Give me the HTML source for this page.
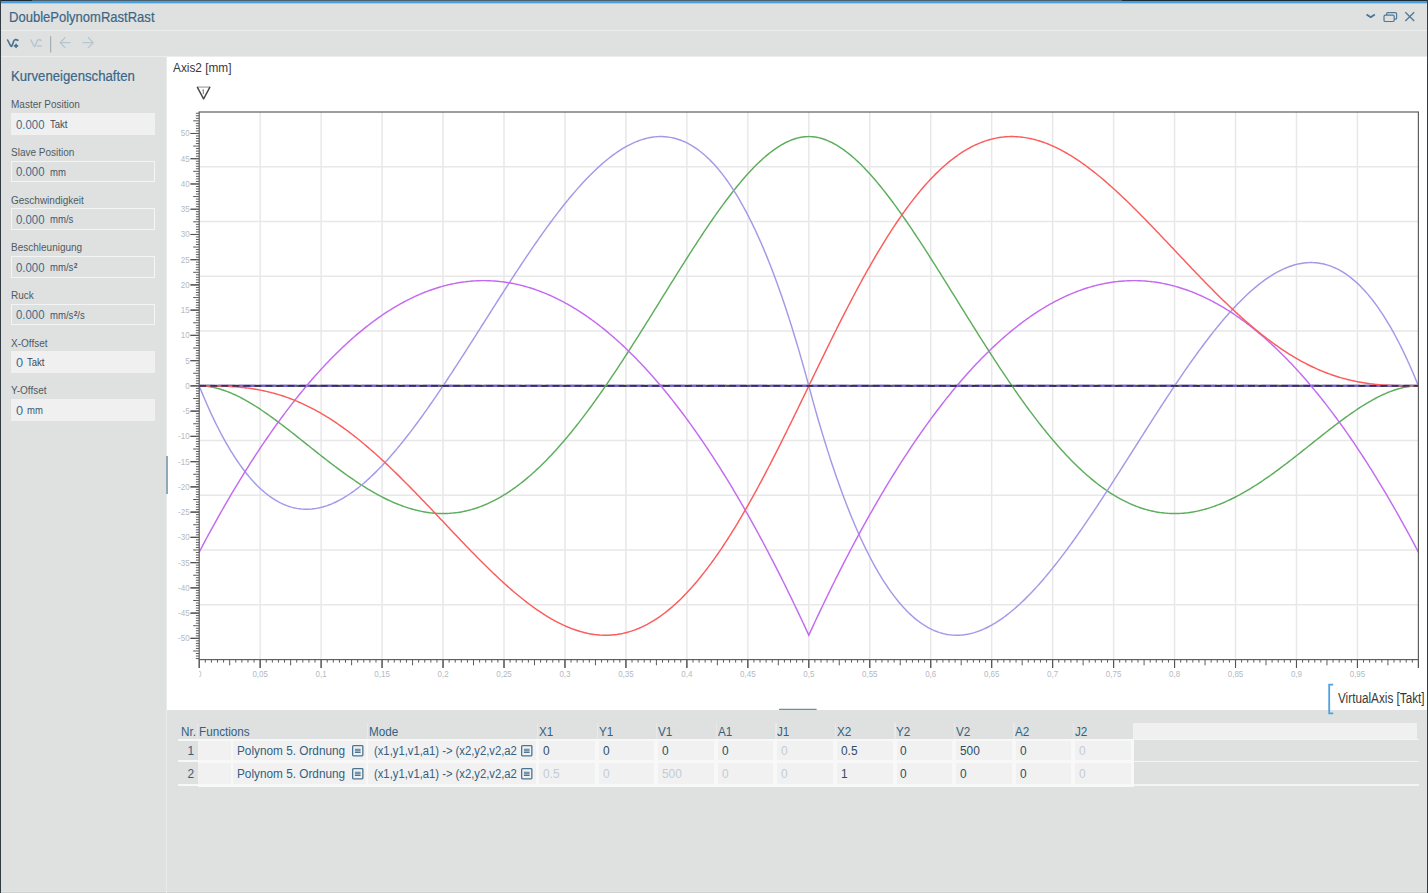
<!DOCTYPE html>
<html><head><meta charset="utf-8">
<style>
*{margin:0;padding:0;box-sizing:border-box}
html,body{width:1428px;height:893px;overflow:hidden;background:#dfe1e0;font-family:"Liberation Sans",sans-serif}
.abs{position:absolute}
.t{position:absolute;white-space:nowrap;line-height:normal}
.sup{font-size:7px;position:relative;top:-3.2px;margin-left:0.3px;font-weight:bold}
#topdark{left:0;top:0;width:1428px;height:1px;background:linear-gradient(90deg,#1c2833 0,#1c2833 32px,#4c5f6d 32px,#4c5f6d 1122px,#1e2a34 1122px)}
#topblue{left:0;top:1px;width:1428px;height:2px;background:#45a0dc}
#topblue2{left:0;top:3px;width:1428px;height:1px;background:#a8cbe2}
#lb{left:0;top:0;width:1px;height:893px;background:#333c43}
#rb{left:1427px;top:0;width:1px;height:893px;background:#333c43}
.hl{background:#eceeed;height:1px}
#left{left:1px;top:57px;width:165px;height:836px;background:#dfe1e0}
#white{left:167px;top:57px;width:1260px;height:653px;background:#fff}
#bottom{left:167px;top:710px;width:1260px;height:183px;background:#dfe1e0}
svg{position:absolute;left:0;top:0}
</style></head><body>
<div class="abs" id="topdark"></div>
<div class="abs" id="topblue"></div>
<div class="abs" id="topblue2"></div>
<div class="abs hl" style="left:1px;top:30px;width:1426px"></div>
<div class="abs hl" style="left:1px;top:56px;width:1426px"></div>
<div class="abs" id="left"></div>
<div class="abs" id="white"></div>
<div class="abs" id="bottom"></div>
<div class="abs" style="left:0;top:891px;width:1428px;height:1px;background:#e3e5e4"></div>
<div class="abs" style="left:0;top:892px;width:1428px;height:1px;background:#cdd0d1"></div>
<div class="abs" id="lb"></div>
<div class="abs" id="rb"></div>

<div class="t" style="left:9.00px;top:8.65px;font-size:14.4px;color:#3b6686;transform:scaleX(0.905);transform-origin:0 0;-webkit-text-stroke:0.2px #3b6686;">DoublePolynomRastRast</div>
<div class="t" style="left:11.40px;top:67.85px;font-size:14.08px;color:#3a6788;transform:scaleX(0.936);transform-origin:0 0;-webkit-text-stroke:0.2px #3a6788;">Kurveneigenschaften</div>
<div class="t" style="left:11.00px;top:99.20px;font-size:10px;color:#505a62;">Master Position</div>
<div class="abs" style="left:11px;top:113.20px;width:144.4px;height:21.6px;background:#f0f0f0"></div>
<div class="t" style="left:15.60px;top:116.74px;font-size:13px;color:#3e6a8c;transform:scaleX(0.875);transform-origin:0 0;">0.000</div>
<div class="t" style="left:49.50px;top:119.20px;font-size:10px;color:#3a4a58;transform:scaleX(0.955);transform-origin:0 0;">Takt</div>
<div class="t" style="left:11.00px;top:146.87px;font-size:10px;color:#505a62;">Slave Position</div>
<div class="abs" style="left:11px;top:160.83px;width:144.4px;height:21.6px;border:1px solid #f3f4f4"></div>
<div class="t" style="left:15.60px;top:164.37px;font-size:13px;color:#3e6a8c;transform:scaleX(0.875);transform-origin:0 0;">0.000</div>
<div class="t" style="left:49.50px;top:166.83px;font-size:10px;color:#40566a;transform:scaleX(0.955);transform-origin:0 0;">mm</div>
<div class="t" style="left:11.00px;top:194.54px;font-size:10px;color:#505a62;">Geschwindigkeit</div>
<div class="abs" style="left:11px;top:208.46px;width:144.4px;height:21.6px;border:1px solid #f3f4f4"></div>
<div class="t" style="left:15.60px;top:212.00px;font-size:13px;color:#3e6a8c;transform:scaleX(0.875);transform-origin:0 0;">0.000</div>
<div class="t" style="left:49.50px;top:214.46px;font-size:10px;color:#40566a;transform:scaleX(0.955);transform-origin:0 0;">mm/s</div>
<div class="t" style="left:11.00px;top:242.21px;font-size:10px;color:#505a62;">Beschleunigung</div>
<div class="abs" style="left:11px;top:256.09px;width:144.4px;height:21.6px;border:1px solid #f3f4f4"></div>
<div class="t" style="left:15.60px;top:259.63px;font-size:13px;color:#3e6a8c;transform:scaleX(0.875);transform-origin:0 0;">0.000</div>
<div class="t" style="left:49.50px;top:262.09px;font-size:10px;color:#40566a;transform:scaleX(0.955);transform-origin:0 0;">mm/s<span class="sup">2</span></div>
<div class="t" style="left:11.00px;top:289.88px;font-size:10px;color:#505a62;">Ruck</div>
<div class="abs" style="left:11px;top:303.72px;width:144.4px;height:21.6px;border:1px solid #f3f4f4"></div>
<div class="t" style="left:15.60px;top:307.26px;font-size:13px;color:#3e6a8c;transform:scaleX(0.875);transform-origin:0 0;">0.000</div>
<div class="t" style="left:49.50px;top:309.72px;font-size:10px;color:#40566a;transform:scaleX(0.955);transform-origin:0 0;">mm/s<span class="sup">2</span>/s</div>
<div class="t" style="left:11.00px;top:337.55px;font-size:10px;color:#505a62;">X-Offset</div>
<div class="abs" style="left:11px;top:351.35px;width:144.4px;height:21.6px;background:#f0f0f0"></div>
<div class="t" style="left:15.60px;top:354.89px;font-size:13px;color:#3e6a8c;transform:scaleX(0.98);transform-origin:0 0;">0</div>
<div class="t" style="left:26.60px;top:357.35px;font-size:10px;color:#3a4a58;transform:scaleX(0.955);transform-origin:0 0;">Takt</div>
<div class="t" style="left:11.00px;top:385.22px;font-size:10px;color:#505a62;">Y-Offset</div>
<div class="abs" style="left:11px;top:398.98px;width:144.4px;height:21.6px;background:#f0f0f0"></div>
<div class="t" style="left:15.60px;top:402.52px;font-size:13px;color:#3e6a8c;transform:scaleX(0.98);transform-origin:0 0;">0</div>
<div class="t" style="left:26.60px;top:404.98px;font-size:10px;color:#40566a;transform:scaleX(0.955);transform-origin:0 0;">mm</div>
<div class="abs" style="left:166px;top:57px;width:1px;height:836px;background:#e9ebea"></div>
<div class="abs" style="left:166px;top:456px;width:1.8px;height:37.7px;background:#8fa8b8"></div>
<div class="t" style="left:172.90px;top:60.23px;font-size:13.45px;color:#383838;transform:scaleX(0.88);transform-origin:0 0;">Axis2 [mm]</div>
<div class="t" style="left:1337.60px;top:690.53px;font-size:13.77px;color:#383838;transform:scaleX(0.853);transform-origin:0 0;">VirtualAxis [Takt]</div>
<div class="abs" style="left:1133px;top:723px;width:284px;height:16.9px;background:#f0f0f0"></div>
<div class="abs" style="left:196.90px;top:723px;width:1.3px;height:16px;background:#e8eaea"></div>
<div class="abs" style="left:366.70px;top:723px;width:1.3px;height:16px;background:#e8eaea"></div>
<div class="abs" style="left:537.00px;top:723px;width:1.3px;height:16px;background:#e8eaea"></div>
<div class="abs" style="left:596.56px;top:723px;width:1.3px;height:16px;background:#e8eaea"></div>
<div class="abs" style="left:656.12px;top:723px;width:1.3px;height:16px;background:#e8eaea"></div>
<div class="abs" style="left:715.68px;top:723px;width:1.3px;height:16px;background:#e8eaea"></div>
<div class="abs" style="left:775.24px;top:723px;width:1.3px;height:16px;background:#e8eaea"></div>
<div class="abs" style="left:834.80px;top:723px;width:1.3px;height:16px;background:#e8eaea"></div>
<div class="abs" style="left:894.36px;top:723px;width:1.3px;height:16px;background:#e8eaea"></div>
<div class="abs" style="left:953.92px;top:723px;width:1.3px;height:16px;background:#e8eaea"></div>
<div class="abs" style="left:1013.48px;top:723px;width:1.3px;height:16px;background:#e8eaea"></div>
<div class="abs" style="left:1073.04px;top:723px;width:1.3px;height:16px;background:#e8eaea"></div>
<div class="abs" style="left:198px;top:739.1px;width:936px;height:47.7px;background:#f8f8f8"></div>
<div class="abs" style="left:178px;top:739.1px;width:20px;height:1.5px;background:#f6f7f7"></div>
<div class="abs" style="left:1134px;top:739.4px;width:285px;height:1.1px;background:#f3f4f4"></div>
<div class="abs" style="left:178px;top:760.2px;width:20px;height:2.2px;background:#f6f7f7"></div>
<div class="abs" style="left:1134px;top:760.5px;width:285px;height:1.8000000000000003px;background:#f3f4f4"></div>
<div class="abs" style="left:178px;top:784.0px;width:20px;height:2.4px;background:#f6f7f7"></div>
<div class="abs" style="left:1134px;top:784.3px;width:285px;height:2.0px;background:#f3f4f4"></div>
<div class="abs" style="left:198.20px;top:741.1px;width:33.00px;height:18.50px;background:#f1f1f1"></div>
<div class="abs" style="left:198.20px;top:762.9px;width:33.00px;height:20.90px;background:#f1f1f1"></div>
<div class="abs" style="left:232.50px;top:741.1px;width:133.80px;height:18.50px;background:#f1f1f1"></div>
<div class="abs" style="left:232.50px;top:762.9px;width:133.80px;height:20.90px;background:#f1f1f1"></div>
<div class="abs" style="left:368.40px;top:741.1px;width:168.00px;height:18.50px;background:#f1f1f1"></div>
<div class="abs" style="left:368.40px;top:762.9px;width:168.00px;height:20.90px;background:#f1f1f1"></div>
<div class="abs" style="left:539.20px;top:741.1px;width:55.56px;height:18.50px;background:#f1f1f1"></div>
<div class="abs" style="left:539.20px;top:762.9px;width:55.56px;height:20.90px;background:#f1f1f1"></div>
<div class="abs" style="left:598.76px;top:741.1px;width:55.56px;height:18.50px;background:#f1f1f1"></div>
<div class="abs" style="left:598.76px;top:762.9px;width:55.56px;height:20.90px;background:#f1f1f1"></div>
<div class="abs" style="left:658.32px;top:741.1px;width:55.56px;height:18.50px;background:#f1f1f1"></div>
<div class="abs" style="left:658.32px;top:762.9px;width:55.56px;height:20.90px;background:#f1f1f1"></div>
<div class="abs" style="left:717.88px;top:741.1px;width:55.56px;height:18.50px;background:#f1f1f1"></div>
<div class="abs" style="left:717.88px;top:762.9px;width:55.56px;height:20.90px;background:#f1f1f1"></div>
<div class="abs" style="left:777.44px;top:741.1px;width:55.56px;height:18.50px;background:#f1f1f1"></div>
<div class="abs" style="left:777.44px;top:762.9px;width:55.56px;height:20.90px;background:#f1f1f1"></div>
<div class="abs" style="left:837.00px;top:741.1px;width:55.56px;height:18.50px;background:#f1f1f1"></div>
<div class="abs" style="left:837.00px;top:762.9px;width:55.56px;height:20.90px;background:#f1f1f1"></div>
<div class="abs" style="left:896.56px;top:741.1px;width:55.56px;height:18.50px;background:#f1f1f1"></div>
<div class="abs" style="left:896.56px;top:762.9px;width:55.56px;height:20.90px;background:#f1f1f1"></div>
<div class="abs" style="left:956.12px;top:741.1px;width:55.56px;height:18.50px;background:#f1f1f1"></div>
<div class="abs" style="left:956.12px;top:762.9px;width:55.56px;height:20.90px;background:#f1f1f1"></div>
<div class="abs" style="left:1015.68px;top:741.1px;width:55.56px;height:18.50px;background:#f1f1f1"></div>
<div class="abs" style="left:1015.68px;top:762.9px;width:55.56px;height:20.90px;background:#f1f1f1"></div>
<div class="abs" style="left:1075.24px;top:741.1px;width:55.56px;height:18.50px;background:#f1f1f1"></div>
<div class="abs" style="left:1075.24px;top:762.9px;width:55.56px;height:20.90px;background:#f1f1f1"></div>
<div class="t" style="left:180.60px;top:724.98px;font-size:12.3px;color:#33607f;transform:scaleX(0.95);transform-origin:0 0;">Nr.</div>
<div class="t" style="left:199.40px;top:724.98px;font-size:12.3px;color:#33607f;transform:scaleX(0.95);transform-origin:0 0;">Functions</div>
<div class="t" style="left:369.20px;top:724.98px;font-size:12.3px;color:#33607f;transform:scaleX(0.95);transform-origin:0 0;">Mode</div>
<div class="t" style="left:539.00px;top:724.98px;font-size:12.3px;color:#33607f;transform:scaleX(0.95);transform-origin:0 0;">X1</div>
<div class="t" style="left:598.56px;top:724.98px;font-size:12.3px;color:#33607f;transform:scaleX(0.95);transform-origin:0 0;">Y1</div>
<div class="t" style="left:658.12px;top:724.98px;font-size:12.3px;color:#33607f;transform:scaleX(0.95);transform-origin:0 0;">V1</div>
<div class="t" style="left:717.68px;top:724.98px;font-size:12.3px;color:#33607f;transform:scaleX(0.95);transform-origin:0 0;">A1</div>
<div class="t" style="left:777.24px;top:724.98px;font-size:12.3px;color:#33607f;transform:scaleX(0.95);transform-origin:0 0;">J1</div>
<div class="t" style="left:836.80px;top:724.98px;font-size:12.3px;color:#33607f;transform:scaleX(0.95);transform-origin:0 0;">X2</div>
<div class="t" style="left:896.36px;top:724.98px;font-size:12.3px;color:#33607f;transform:scaleX(0.95);transform-origin:0 0;">Y2</div>
<div class="t" style="left:955.92px;top:724.98px;font-size:12.3px;color:#33607f;transform:scaleX(0.95);transform-origin:0 0;">V2</div>
<div class="t" style="left:1015.48px;top:724.98px;font-size:12.3px;color:#33607f;transform:scaleX(0.95);transform-origin:0 0;">A2</div>
<div class="t" style="left:1075.04px;top:724.98px;font-size:12.3px;color:#33607f;transform:scaleX(0.95);transform-origin:0 0;">J2</div>
<div class="t" style="left:182.00px;width:12px;text-align:right;top:744.20px;font-size:12.5px;color:#33607f;transform:scaleX(0.95);transform-origin:100% 0;">1</div>
<div class="t" style="left:237.40px;top:744.20px;font-size:12.5px;color:#33607f;transform:scaleX(0.943);transform-origin:0 0;">Polynom 5. Ordnung</div>
<div class="t" style="left:374.20px;top:744.20px;font-size:12.5px;color:#33607f;transform:scaleX(0.9);transform-origin:0 0;">(x1,y1,v1,a1) -&gt; (x2,y2,v2,a2</div>
<svg width="13" height="13" viewBox="0 0 13 13" style="left:351.6px;top:745.3px"><rect x="0.65" y="0.65" width="10.2" height="10.2" rx="0.8" stroke="#4a7592" stroke-width="1.3" fill="none"/><path d="M2.9,4.3 H8.6 M2.9,5.9 H8.6 M2.9,7.5 H8.6" stroke="#4a7592" stroke-width="1.1"/></svg>
<svg width="13" height="13" viewBox="0 0 13 13" style="left:521.2px;top:745.3px"><rect x="0.65" y="0.65" width="10.2" height="10.2" rx="0.8" stroke="#4a7592" stroke-width="1.3" fill="none"/><path d="M2.9,4.3 H8.6 M2.9,5.9 H8.6 M2.9,7.5 H8.6" stroke="#4a7592" stroke-width="1.1"/></svg>
<div class="t" style="left:543.10px;top:744.20px;font-size:12.5px;color:#2f4d63;transform:scaleX(0.95);transform-origin:0 0;">0</div>
<div class="t" style="left:602.66px;top:744.20px;font-size:12.5px;color:#2f4d63;transform:scaleX(0.95);transform-origin:0 0;">0</div>
<div class="t" style="left:662.22px;top:744.20px;font-size:12.5px;color:#2f4d63;transform:scaleX(0.95);transform-origin:0 0;">0</div>
<div class="t" style="left:721.78px;top:744.20px;font-size:12.5px;color:#2f4d63;transform:scaleX(0.95);transform-origin:0 0;">0</div>
<div class="t" style="left:781.34px;top:744.20px;font-size:12.5px;color:#c2cdd6;transform:scaleX(0.95);transform-origin:0 0;">0</div>
<div class="t" style="left:840.90px;top:744.20px;font-size:12.5px;color:#2f4d63;transform:scaleX(0.95);transform-origin:0 0;">0.5</div>
<div class="t" style="left:900.46px;top:744.20px;font-size:12.5px;color:#2f4d63;transform:scaleX(0.95);transform-origin:0 0;">0</div>
<div class="t" style="left:960.02px;top:744.20px;font-size:12.5px;color:#2f4d63;transform:scaleX(0.95);transform-origin:0 0;">500</div>
<div class="t" style="left:1019.58px;top:744.20px;font-size:12.5px;color:#2f4d63;transform:scaleX(0.95);transform-origin:0 0;">0</div>
<div class="t" style="left:1079.14px;top:744.20px;font-size:12.5px;color:#c2cdd6;transform:scaleX(0.95);transform-origin:0 0;">0</div>
<div class="t" style="left:182.00px;width:12px;text-align:right;top:767.20px;font-size:12.5px;color:#33607f;transform:scaleX(0.95);transform-origin:100% 0;">2</div>
<div class="t" style="left:237.40px;top:767.20px;font-size:12.5px;color:#33607f;transform:scaleX(0.943);transform-origin:0 0;">Polynom 5. Ordnung</div>
<div class="t" style="left:374.20px;top:767.20px;font-size:12.5px;color:#33607f;transform:scaleX(0.9);transform-origin:0 0;">(x1,y1,v1,a1) -&gt; (x2,y2,v2,a2</div>
<svg width="13" height="13" viewBox="0 0 13 13" style="left:351.6px;top:768.3px"><rect x="0.65" y="0.65" width="10.2" height="10.2" rx="0.8" stroke="#4a7592" stroke-width="1.3" fill="none"/><path d="M2.9,4.3 H8.6 M2.9,5.9 H8.6 M2.9,7.5 H8.6" stroke="#4a7592" stroke-width="1.1"/></svg>
<svg width="13" height="13" viewBox="0 0 13 13" style="left:521.2px;top:768.3px"><rect x="0.65" y="0.65" width="10.2" height="10.2" rx="0.8" stroke="#4a7592" stroke-width="1.3" fill="none"/><path d="M2.9,4.3 H8.6 M2.9,5.9 H8.6 M2.9,7.5 H8.6" stroke="#4a7592" stroke-width="1.1"/></svg>
<div class="t" style="left:543.10px;top:767.20px;font-size:12.5px;color:#c2cdd6;transform:scaleX(0.95);transform-origin:0 0;">0.5</div>
<div class="t" style="left:602.66px;top:767.20px;font-size:12.5px;color:#c2cdd6;transform:scaleX(0.95);transform-origin:0 0;">0</div>
<div class="t" style="left:662.22px;top:767.20px;font-size:12.5px;color:#c2cdd6;transform:scaleX(0.95);transform-origin:0 0;">500</div>
<div class="t" style="left:721.78px;top:767.20px;font-size:12.5px;color:#c2cdd6;transform:scaleX(0.95);transform-origin:0 0;">0</div>
<div class="t" style="left:781.34px;top:767.20px;font-size:12.5px;color:#c2cdd6;transform:scaleX(0.95);transform-origin:0 0;">0</div>
<div class="t" style="left:840.90px;top:767.20px;font-size:12.5px;color:#2f4d63;transform:scaleX(0.95);transform-origin:0 0;">1</div>
<div class="t" style="left:900.46px;top:767.20px;font-size:12.5px;color:#2f4d63;transform:scaleX(0.95);transform-origin:0 0;">0</div>
<div class="t" style="left:960.02px;top:767.20px;font-size:12.5px;color:#2f4d63;transform:scaleX(0.95);transform-origin:0 0;">0</div>
<div class="t" style="left:1019.58px;top:767.20px;font-size:12.5px;color:#2f4d63;transform:scaleX(0.95);transform-origin:0 0;">0</div>
<div class="t" style="left:1079.14px;top:767.20px;font-size:12.5px;color:#c2cdd6;transform:scaleX(0.95);transform-origin:0 0;">0</div>

<svg width="1428" height="893" viewBox="0 0 1428 893">
<path d="M260.16,112.0 V659.6 M321.12,112.0 V659.6 M382.08,112.0 V659.6 M443.04,112.0 V659.6 M504.00,112.0 V659.6 M564.96,112.0 V659.6 M625.92,112.0 V659.6 M686.88,112.0 V659.6 M747.84,112.0 V659.6 M808.80,112.0 V659.6 M869.76,112.0 V659.6 M930.72,112.0 V659.6 M991.68,112.0 V659.6 M1052.64,112.0 V659.6 M1113.60,112.0 V659.6 M1174.56,112.0 V659.6 M1235.52,112.0 V659.6 M1296.48,112.0 V659.6 M1357.44,112.0 V659.6 M199.2,166.76 H1418.4 M199.2,221.52 H1418.4 M199.2,276.28 H1418.4 M199.2,331.04 H1418.4 M199.2,385.80 H1418.4 M199.2,440.56 H1418.4 M199.2,495.32 H1418.4 M199.2,550.08 H1418.4 M199.2,604.84 H1418.4" stroke="#e8e8e8" stroke-width="1.5" fill="none"/>
<path d="M199.2,385.9 H1418.4" stroke="#5c5c5c" stroke-width="2.1" fill="none"/>
<path d="M199.2,385.9 H1418.4" stroke="#7566d6" stroke-width="2.1" stroke-dasharray="16.95 3.5" stroke-dashoffset="1.35" fill="none"/>
<path d="M199.20,385.90 L200.72,385.92 L202.25,385.97 L203.77,386.07 L205.30,386.19 L206.82,386.35 L208.34,386.55 L209.87,386.78 L211.39,387.04 L212.92,387.34 L214.44,387.66 L215.96,388.02 L217.49,388.41 L219.01,388.82 L220.54,389.27 L222.06,389.75 L223.58,390.25 L225.11,390.78 L226.63,391.34 L228.16,391.92 L229.68,392.53 L231.20,393.16 L232.73,393.82 L234.25,394.51 L235.78,395.21 L237.30,395.94 L238.82,396.69 L240.35,397.46 L241.87,398.26 L243.40,399.07 L244.92,399.90 L246.44,400.76 L247.97,401.63 L249.49,402.52 L251.02,403.42 L252.54,404.35 L254.06,405.29 L255.59,406.25 L257.11,407.22 L258.64,408.21 L260.16,409.21 L261.68,410.23 L263.21,411.26 L264.73,412.30 L266.26,413.36 L267.78,414.43 L269.30,415.51 L270.83,416.60 L272.35,417.70 L273.88,418.81 L275.40,419.93 L276.92,421.06 L278.45,422.19 L279.97,423.34 L281.50,424.49 L283.02,425.66 L284.54,426.82 L286.07,428.00 L287.59,429.18 L289.12,430.36 L290.64,431.55 L292.16,432.75 L293.69,433.94 L295.21,435.15 L296.74,436.35 L298.26,437.56 L299.78,438.77 L301.31,439.98 L302.83,441.19 L304.36,442.41 L305.88,443.62 L307.40,444.84 L308.93,446.05 L310.45,447.27 L311.98,448.48 L313.50,449.69 L315.02,450.90 L316.55,452.11 L318.07,453.31 L319.60,454.51 L321.12,455.71 L322.64,456.91 L324.17,458.10 L325.69,459.28 L327.22,460.47 L328.74,461.64 L330.26,462.81 L331.79,463.98 L333.31,465.14 L334.84,466.29 L336.36,467.43 L337.88,468.57 L339.41,469.70 L340.93,470.82 L342.46,471.94 L343.98,473.04 L345.50,474.14 L347.03,475.22 L348.55,476.30 L350.08,477.37 L351.60,478.43 L353.12,479.47 L354.65,480.51 L356.17,481.53 L357.70,482.55 L359.22,483.55 L360.74,484.54 L362.27,485.51 L363.79,486.48 L365.32,487.43 L366.84,488.37 L368.36,489.29 L369.89,490.21 L371.41,491.10 L372.94,491.99 L374.46,492.86 L375.98,493.71 L377.51,494.55 L379.03,495.38 L380.56,496.18 L382.08,496.98 L383.60,497.75 L385.13,498.52 L386.65,499.26 L388.18,499.99 L389.70,500.70 L391.22,501.40 L392.75,502.07 L394.27,502.73 L395.80,503.37 L397.32,504.00 L398.84,504.61 L400.37,505.19 L401.89,505.76 L403.42,506.31 L404.94,506.85 L406.46,507.36 L407.99,507.85 L409.51,508.33 L411.04,508.78 L412.56,509.22 L414.08,509.63 L415.61,510.03 L417.13,510.40 L418.66,510.76 L420.18,511.09 L421.70,511.41 L423.23,511.70 L424.75,511.97 L426.28,512.22 L427.80,512.45 L429.32,512.66 L430.85,512.85 L432.37,513.01 L433.90,513.16 L435.42,513.28 L436.94,513.38 L438.47,513.46 L439.99,513.51 L441.52,513.55 L443.04,513.56 L444.56,513.55 L446.09,513.51 L447.61,513.46 L449.14,513.38 L450.66,513.28 L452.18,513.15 L453.71,513.00 L455.23,512.83 L456.76,512.64 L458.28,512.42 L459.80,512.18 L461.33,511.92 L462.85,511.63 L464.38,511.32 L465.90,510.99 L467.42,510.63 L468.95,510.25 L470.47,509.85 L472.00,509.42 L473.52,508.97 L475.04,508.49 L476.57,508.00 L478.09,507.47 L479.62,506.93 L481.14,506.36 L482.66,505.77 L484.19,505.15 L485.71,504.51 L487.24,503.85 L488.76,503.16 L490.28,502.45 L491.81,501.71 L493.33,500.95 L494.86,500.17 L496.38,499.36 L497.90,498.54 L499.43,497.68 L500.95,496.81 L502.48,495.91 L504.00,494.98 L505.52,494.04 L507.05,493.07 L508.57,492.07 L510.10,491.06 L511.62,490.02 L513.14,488.95 L514.67,487.87 L516.19,486.76 L517.72,485.63 L519.24,484.47 L520.76,483.30 L522.29,482.10 L523.81,480.87 L525.34,479.63 L526.86,478.36 L528.38,477.07 L529.91,475.76 L531.43,474.43 L532.96,473.07 L534.48,471.69 L536.00,470.29 L537.53,468.87 L539.05,467.43 L540.58,465.97 L542.10,464.48 L543.62,462.98 L545.15,461.45 L546.67,459.90 L548.20,458.33 L549.72,456.74 L551.24,455.13 L552.77,453.50 L554.29,451.85 L555.82,450.18 L557.34,448.49 L558.86,446.78 L560.39,445.06 L561.91,443.31 L563.44,441.54 L564.96,439.76 L566.48,437.95 L568.01,436.13 L569.53,434.29 L571.06,432.43 L572.58,430.55 L574.10,428.65 L575.63,426.74 L577.15,424.81 L578.68,422.87 L580.20,420.90 L581.72,418.92 L583.25,416.92 L584.77,414.91 L586.30,412.88 L587.82,410.84 L589.34,408.78 L590.87,406.70 L592.39,404.61 L593.92,402.50 L595.44,400.38 L596.96,398.25 L598.49,396.10 L600.01,393.94 L601.54,391.76 L603.06,389.58 L604.58,387.37 L606.11,385.16 L607.63,382.93 L609.16,380.70 L610.68,378.44 L612.20,376.18 L613.73,373.91 L615.25,371.63 L616.78,369.33 L618.30,367.03 L619.82,364.71 L621.35,362.39 L622.87,360.05 L624.40,357.71 L625.92,355.36 L627.44,353.00 L628.97,350.63 L630.49,348.25 L632.02,345.87 L633.54,343.48 L635.06,341.08 L636.59,338.68 L638.11,336.27 L639.64,333.85 L641.16,331.43 L642.68,329.00 L644.21,326.57 L645.73,324.14 L647.26,321.70 L648.78,319.26 L650.30,316.81 L651.83,314.37 L653.35,311.92 L654.88,309.46 L656.40,307.01 L657.92,304.55 L659.45,302.10 L660.97,299.64 L662.50,297.19 L664.02,294.73 L665.54,292.28 L667.07,289.82 L668.59,287.37 L670.12,284.92 L671.64,282.48 L673.16,280.03 L674.69,277.59 L676.21,275.15 L677.74,272.72 L679.26,270.29 L680.78,267.87 L682.31,265.45 L683.83,263.04 L685.36,260.64 L686.88,258.24 L688.40,255.85 L689.93,253.47 L691.45,251.10 L692.98,248.73 L694.50,246.38 L696.02,244.03 L697.55,241.70 L699.07,239.37 L700.60,237.06 L702.12,234.76 L703.64,232.47 L705.17,230.20 L706.69,227.93 L708.22,225.68 L709.74,223.45 L711.26,221.23 L712.79,219.03 L714.31,216.84 L715.84,214.67 L717.36,212.51 L718.88,210.38 L720.41,208.26 L721.93,206.16 L723.46,204.08 L724.98,202.01 L726.50,199.97 L728.03,197.95 L729.55,195.95 L731.08,193.98 L732.60,192.02 L734.12,190.09 L735.65,188.18 L737.17,186.30 L738.70,184.44 L740.22,182.61 L741.74,180.80 L743.27,179.02 L744.79,177.27 L746.32,175.54 L747.84,173.84 L749.36,172.17 L750.89,170.54 L752.41,168.93 L753.94,167.35 L755.46,165.80 L756.98,164.29 L758.51,162.81 L760.03,161.36 L761.56,159.95 L763.08,158.57 L764.60,157.22 L766.13,155.91 L767.65,154.64 L769.18,153.41 L770.70,152.21 L772.22,151.05 L773.75,149.93 L775.27,148.85 L776.80,147.81 L778.32,146.81 L779.84,145.86 L781.37,144.94 L782.89,144.07 L784.42,143.25 L785.94,142.47 L787.46,141.73 L788.99,141.04 L790.51,140.40 L792.04,139.80 L793.56,139.25 L795.08,138.75 L796.61,138.30 L798.13,137.90 L799.66,137.55 L801.18,137.25 L802.70,137.01 L804.23,136.82 L805.75,136.68 L807.28,136.60 L808.80,136.57 L810.32,136.60 L811.85,136.68 L813.37,136.82 L814.90,137.01 L816.42,137.25 L817.94,137.55 L819.47,137.90 L820.99,138.30 L822.52,138.75 L824.04,139.25 L825.56,139.80 L827.09,140.40 L828.61,141.04 L830.14,141.73 L831.66,142.47 L833.18,143.25 L834.71,144.07 L836.23,144.94 L837.76,145.86 L839.28,146.81 L840.80,147.81 L842.33,148.85 L843.85,149.93 L845.38,151.05 L846.90,152.21 L848.42,153.41 L849.95,154.64 L851.47,155.91 L853.00,157.22 L854.52,158.57 L856.04,159.95 L857.57,161.36 L859.09,162.81 L860.62,164.29 L862.14,165.80 L863.66,167.35 L865.19,168.93 L866.71,170.54 L868.24,172.17 L869.76,173.84 L871.28,175.54 L872.81,177.27 L874.33,179.02 L875.86,180.80 L877.38,182.61 L878.90,184.44 L880.43,186.30 L881.95,188.18 L883.48,190.09 L885.00,192.02 L886.52,193.98 L888.05,195.95 L889.57,197.95 L891.10,199.97 L892.62,202.01 L894.14,204.08 L895.67,206.16 L897.19,208.26 L898.72,210.38 L900.24,212.51 L901.76,214.67 L903.29,216.84 L904.81,219.03 L906.34,221.23 L907.86,223.45 L909.38,225.68 L910.91,227.93 L912.43,230.20 L913.96,232.47 L915.48,234.76 L917.00,237.06 L918.53,239.37 L920.05,241.70 L921.58,244.03 L923.10,246.38 L924.62,248.73 L926.15,251.10 L927.67,253.47 L929.20,255.85 L930.72,258.24 L932.24,260.64 L933.77,263.04 L935.29,265.45 L936.82,267.87 L938.34,270.29 L939.86,272.72 L941.39,275.15 L942.91,277.59 L944.44,280.03 L945.96,282.48 L947.48,284.92 L949.01,287.37 L950.53,289.82 L952.06,292.28 L953.58,294.73 L955.10,297.19 L956.63,299.64 L958.15,302.10 L959.68,304.55 L961.20,307.01 L962.72,309.46 L964.25,311.92 L965.77,314.37 L967.30,316.81 L968.82,319.26 L970.34,321.70 L971.87,324.14 L973.39,326.57 L974.92,329.00 L976.44,331.43 L977.96,333.85 L979.49,336.27 L981.01,338.68 L982.54,341.08 L984.06,343.48 L985.58,345.87 L987.11,348.25 L988.63,350.63 L990.16,353.00 L991.68,355.36 L993.20,357.71 L994.73,360.05 L996.25,362.39 L997.78,364.71 L999.30,367.03 L1000.82,369.33 L1002.35,371.63 L1003.87,373.91 L1005.40,376.18 L1006.92,378.44 L1008.44,380.70 L1009.97,382.93 L1011.49,385.16 L1013.02,387.37 L1014.54,389.58 L1016.06,391.76 L1017.59,393.94 L1019.11,396.10 L1020.64,398.25 L1022.16,400.38 L1023.68,402.50 L1025.21,404.61 L1026.73,406.70 L1028.26,408.78 L1029.78,410.84 L1031.30,412.88 L1032.83,414.91 L1034.35,416.92 L1035.88,418.92 L1037.40,420.90 L1038.92,422.87 L1040.45,424.81 L1041.97,426.74 L1043.50,428.65 L1045.02,430.55 L1046.54,432.43 L1048.07,434.29 L1049.59,436.13 L1051.12,437.95 L1052.64,439.76 L1054.16,441.54 L1055.69,443.31 L1057.21,445.06 L1058.74,446.78 L1060.26,448.49 L1061.78,450.18 L1063.31,451.85 L1064.83,453.50 L1066.36,455.13 L1067.88,456.74 L1069.40,458.33 L1070.93,459.90 L1072.45,461.45 L1073.98,462.98 L1075.50,464.48 L1077.02,465.97 L1078.55,467.43 L1080.07,468.87 L1081.60,470.29 L1083.12,471.69 L1084.64,473.07 L1086.17,474.43 L1087.69,475.76 L1089.22,477.07 L1090.74,478.36 L1092.26,479.63 L1093.79,480.87 L1095.31,482.10 L1096.84,483.30 L1098.36,484.47 L1099.88,485.63 L1101.41,486.76 L1102.93,487.87 L1104.46,488.95 L1105.98,490.02 L1107.50,491.06 L1109.03,492.07 L1110.55,493.07 L1112.08,494.04 L1113.60,494.98 L1115.12,495.91 L1116.65,496.81 L1118.17,497.68 L1119.70,498.54 L1121.22,499.36 L1122.74,500.17 L1124.27,500.95 L1125.79,501.71 L1127.32,502.45 L1128.84,503.16 L1130.36,503.85 L1131.89,504.51 L1133.41,505.15 L1134.94,505.77 L1136.46,506.36 L1137.98,506.93 L1139.51,507.47 L1141.03,508.00 L1142.56,508.49 L1144.08,508.97 L1145.60,509.42 L1147.13,509.85 L1148.65,510.25 L1150.18,510.63 L1151.70,510.99 L1153.22,511.32 L1154.75,511.63 L1156.27,511.92 L1157.80,512.18 L1159.32,512.42 L1160.84,512.64 L1162.37,512.83 L1163.89,513.00 L1165.42,513.15 L1166.94,513.28 L1168.46,513.38 L1169.99,513.46 L1171.51,513.51 L1173.04,513.55 L1174.56,513.56 L1176.08,513.55 L1177.61,513.51 L1179.13,513.46 L1180.66,513.38 L1182.18,513.28 L1183.70,513.16 L1185.23,513.01 L1186.75,512.85 L1188.28,512.66 L1189.80,512.45 L1191.32,512.22 L1192.85,511.97 L1194.37,511.70 L1195.90,511.41 L1197.42,511.09 L1198.94,510.76 L1200.47,510.40 L1201.99,510.03 L1203.52,509.63 L1205.04,509.22 L1206.56,508.78 L1208.09,508.33 L1209.61,507.85 L1211.14,507.36 L1212.66,506.85 L1214.18,506.31 L1215.71,505.76 L1217.23,505.19 L1218.76,504.61 L1220.28,504.00 L1221.80,503.37 L1223.33,502.73 L1224.85,502.07 L1226.38,501.40 L1227.90,500.70 L1229.42,499.99 L1230.95,499.26 L1232.47,498.52 L1234.00,497.75 L1235.52,496.98 L1237.04,496.18 L1238.57,495.38 L1240.09,494.55 L1241.62,493.71 L1243.14,492.86 L1244.66,491.99 L1246.19,491.10 L1247.71,490.21 L1249.24,489.29 L1250.76,488.37 L1252.28,487.43 L1253.81,486.48 L1255.33,485.51 L1256.86,484.54 L1258.38,483.55 L1259.90,482.55 L1261.43,481.53 L1262.95,480.51 L1264.48,479.47 L1266.00,478.43 L1267.52,477.37 L1269.05,476.30 L1270.57,475.22 L1272.10,474.14 L1273.62,473.04 L1275.14,471.94 L1276.67,470.82 L1278.19,469.70 L1279.72,468.57 L1281.24,467.43 L1282.76,466.29 L1284.29,465.14 L1285.81,463.98 L1287.34,462.81 L1288.86,461.64 L1290.38,460.47 L1291.91,459.28 L1293.43,458.10 L1294.96,456.91 L1296.48,455.71 L1298.00,454.51 L1299.53,453.31 L1301.05,452.11 L1302.58,450.90 L1304.10,449.69 L1305.62,448.48 L1307.15,447.27 L1308.67,446.05 L1310.20,444.84 L1311.72,443.62 L1313.24,442.41 L1314.77,441.19 L1316.29,439.98 L1317.82,438.77 L1319.34,437.56 L1320.86,436.35 L1322.39,435.15 L1323.91,433.94 L1325.44,432.75 L1326.96,431.55 L1328.48,430.36 L1330.01,429.18 L1331.53,428.00 L1333.06,426.82 L1334.58,425.66 L1336.10,424.49 L1337.63,423.34 L1339.15,422.19 L1340.68,421.06 L1342.20,419.93 L1343.72,418.81 L1345.25,417.70 L1346.77,416.60 L1348.30,415.51 L1349.82,414.43 L1351.34,413.36 L1352.87,412.30 L1354.39,411.26 L1355.92,410.23 L1357.44,409.21 L1358.96,408.21 L1360.49,407.22 L1362.01,406.25 L1363.54,405.29 L1365.06,404.35 L1366.58,403.42 L1368.11,402.52 L1369.63,401.63 L1371.16,400.76 L1372.68,399.90 L1374.20,399.07 L1375.73,398.26 L1377.25,397.46 L1378.78,396.69 L1380.30,395.94 L1381.82,395.21 L1383.35,394.51 L1384.87,393.82 L1386.40,393.16 L1387.92,392.53 L1389.44,391.92 L1390.97,391.34 L1392.49,390.78 L1394.02,390.25 L1395.54,389.75 L1397.06,389.27 L1398.59,388.82 L1400.11,388.41 L1401.64,388.02 L1403.16,387.66 L1404.68,387.34 L1406.21,387.04 L1407.73,386.78 L1409.26,386.55 L1410.78,386.35 L1412.30,386.19 L1413.83,386.07 L1415.35,385.97 L1416.88,385.92 L1418.40,385.90" stroke="#5cae5c" stroke-width="1.45" fill="none"/>
<path d="M199.20,385.90 L200.72,389.66 L202.25,393.36 L203.77,396.99 L205.30,400.56 L206.82,404.06 L208.34,407.50 L209.87,410.87 L211.39,414.18 L212.92,417.42 L214.44,420.60 L215.96,423.72 L217.49,426.78 L219.01,429.77 L220.54,432.71 L222.06,435.58 L223.58,438.39 L225.11,441.13 L226.63,443.82 L228.16,446.45 L229.68,449.02 L231.20,451.53 L232.73,453.98 L234.25,456.37 L235.78,458.71 L237.30,460.98 L238.82,463.20 L240.35,465.36 L241.87,467.46 L243.40,469.51 L244.92,471.50 L246.44,473.44 L247.97,475.32 L249.49,477.15 L251.02,478.92 L252.54,480.63 L254.06,482.29 L255.59,483.90 L257.11,485.46 L258.64,486.96 L260.16,488.41 L261.68,489.81 L263.21,491.15 L264.73,492.45 L266.26,493.69 L267.78,494.88 L269.30,496.03 L270.83,497.12 L272.35,498.16 L273.88,499.15 L275.40,500.10 L276.92,500.99 L278.45,501.84 L279.97,502.64 L281.50,503.39 L283.02,504.09 L284.54,504.75 L286.07,505.36 L287.59,505.93 L289.12,506.45 L290.64,506.92 L292.16,507.35 L293.69,507.73 L295.21,508.07 L296.74,508.37 L298.26,508.62 L299.78,508.83 L301.31,508.99 L302.83,509.11 L304.36,509.20 L305.88,509.23 L307.40,509.23 L308.93,509.19 L310.45,509.10 L311.98,508.98 L313.50,508.81 L315.02,508.61 L316.55,508.36 L318.07,508.08 L319.60,507.76 L321.12,507.39 L322.64,507.00 L324.17,506.56 L325.69,506.09 L327.22,505.58 L328.74,505.03 L330.26,504.45 L331.79,503.83 L333.31,503.17 L334.84,502.48 L336.36,501.76 L337.88,501.00 L339.41,500.21 L340.93,499.38 L342.46,498.52 L343.98,497.63 L345.50,496.70 L347.03,495.75 L348.55,494.76 L350.08,493.73 L351.60,492.68 L353.12,491.60 L354.65,490.49 L356.17,489.34 L357.70,488.17 L359.22,486.97 L360.74,485.73 L362.27,484.47 L363.79,483.18 L365.32,481.87 L366.84,480.52 L368.36,479.15 L369.89,477.75 L371.41,476.32 L372.94,474.87 L374.46,473.39 L375.98,471.89 L377.51,470.36 L379.03,468.81 L380.56,467.23 L382.08,465.63 L383.60,464.01 L385.13,462.36 L386.65,460.68 L388.18,458.99 L389.70,457.27 L391.22,455.53 L392.75,453.77 L394.27,451.99 L395.80,450.19 L397.32,448.37 L398.84,446.52 L400.37,444.66 L401.89,442.78 L403.42,440.88 L404.94,438.96 L406.46,437.02 L407.99,435.06 L409.51,433.09 L411.04,431.10 L412.56,429.09 L414.08,427.06 L415.61,425.02 L417.13,422.96 L418.66,420.89 L420.18,418.80 L421.70,416.70 L423.23,414.58 L424.75,412.45 L426.28,410.31 L427.80,408.15 L429.32,405.97 L430.85,403.79 L432.37,401.59 L433.90,399.38 L435.42,397.16 L436.94,394.93 L438.47,392.69 L439.99,390.44 L441.52,388.17 L443.04,385.90 L444.56,383.62 L446.09,381.33 L447.61,379.02 L449.14,376.72 L450.66,374.40 L452.18,372.07 L453.71,369.74 L455.23,367.40 L456.76,365.06 L458.28,362.70 L459.80,360.35 L461.33,357.98 L462.85,355.61 L464.38,353.24 L465.90,350.86 L467.42,348.48 L468.95,346.09 L470.47,343.70 L472.00,341.31 L473.52,338.92 L475.04,336.52 L476.57,334.12 L478.09,331.72 L479.62,329.31 L481.14,326.91 L482.66,324.51 L484.19,322.10 L485.71,319.70 L487.24,317.29 L488.76,314.89 L490.28,312.49 L491.81,310.09 L493.33,307.69 L494.86,305.29 L496.38,302.90 L497.90,300.51 L499.43,298.12 L500.95,295.74 L502.48,293.36 L504.00,290.98 L505.52,288.61 L507.05,286.25 L508.57,283.89 L510.10,281.53 L511.62,279.18 L513.14,276.84 L514.67,274.51 L516.19,272.18 L517.72,269.86 L519.24,267.55 L520.76,265.25 L522.29,262.95 L523.81,260.67 L525.34,258.39 L526.86,256.12 L528.38,253.87 L529.91,251.62 L531.43,249.38 L532.96,247.16 L534.48,244.95 L536.00,242.75 L537.53,240.56 L539.05,238.38 L540.58,236.22 L542.10,234.07 L543.62,231.93 L545.15,229.81 L546.67,227.70 L548.20,225.61 L549.72,223.53 L551.24,221.47 L552.77,219.42 L554.29,217.39 L555.82,215.38 L557.34,213.38 L558.86,211.40 L560.39,209.44 L561.91,207.49 L563.44,205.57 L564.96,203.66 L566.48,201.77 L568.01,199.90 L569.53,198.05 L571.06,196.22 L572.58,194.41 L574.10,192.62 L575.63,190.85 L577.15,189.11 L578.68,187.38 L580.20,185.68 L581.72,184.00 L583.25,182.35 L584.77,180.71 L586.30,179.10 L587.82,177.52 L589.34,175.96 L590.87,174.42 L592.39,172.91 L593.92,171.42 L595.44,169.96 L596.96,168.53 L598.49,167.12 L600.01,165.74 L601.54,164.38 L603.06,163.06 L604.58,161.76 L606.11,160.49 L607.63,159.25 L609.16,158.04 L610.68,156.85 L612.20,155.70 L613.73,154.57 L615.25,153.48 L616.78,152.42 L618.30,151.39 L619.82,150.39 L621.35,149.42 L622.87,148.48 L624.40,147.58 L625.92,146.71 L627.44,145.87 L628.97,145.07 L630.49,144.30 L632.02,143.56 L633.54,142.86 L635.06,142.19 L636.59,141.56 L638.11,140.97 L639.64,140.41 L641.16,139.89 L642.68,139.40 L644.21,138.95 L645.73,138.54 L647.26,138.17 L648.78,137.83 L650.30,137.53 L651.83,137.28 L653.35,137.06 L654.88,136.88 L656.40,136.74 L657.92,136.64 L659.45,136.58 L660.97,136.57 L662.50,136.59 L664.02,136.66 L665.54,136.77 L667.07,136.92 L668.59,137.11 L670.12,137.35 L671.64,137.63 L673.16,137.96 L674.69,138.32 L676.21,138.74 L677.74,139.20 L679.26,139.70 L680.78,140.25 L682.31,140.84 L683.83,141.49 L685.36,142.18 L686.88,142.91 L688.40,143.69 L689.93,144.52 L691.45,145.40 L692.98,146.33 L694.50,147.31 L696.02,148.33 L697.55,149.41 L699.07,150.53 L700.60,151.71 L702.12,152.94 L703.64,154.21 L705.17,155.54 L706.69,156.92 L708.22,158.36 L709.74,159.84 L711.26,161.38 L712.79,162.97 L714.31,164.61 L715.84,166.31 L717.36,168.06 L718.88,169.87 L720.41,171.73 L721.93,173.65 L723.46,175.62 L724.98,177.65 L726.50,179.74 L728.03,181.88 L729.55,184.08 L731.08,186.33 L732.60,188.65 L734.12,191.02 L735.65,193.45 L737.17,195.94 L738.70,198.49 L740.22,201.10 L741.74,203.77 L743.27,206.50 L744.79,209.29 L746.32,212.14 L747.84,215.05 L749.36,218.02 L750.89,221.06 L752.41,224.15 L753.94,227.32 L755.46,230.54 L756.98,233.83 L758.51,237.18 L760.03,240.59 L761.56,244.07 L763.08,247.62 L764.60,251.23 L766.13,254.90 L767.65,258.64 L769.18,262.45 L770.70,266.33 L772.22,270.27 L773.75,274.28 L775.27,278.35 L776.80,282.50 L778.32,286.71 L779.84,290.99 L781.37,295.34 L782.89,299.76 L784.42,304.26 L785.94,308.82 L787.46,313.45 L788.99,318.15 L790.51,322.92 L792.04,327.77 L793.56,332.69 L795.08,337.68 L796.61,342.74 L798.13,347.87 L799.66,353.08 L801.18,358.37 L802.70,363.72 L804.23,369.15 L805.75,374.66 L807.28,380.24 L808.80,385.90 L810.32,391.56 L811.85,397.14 L813.37,402.65 L814.90,408.08 L816.42,413.43 L817.94,418.72 L819.47,423.93 L820.99,429.06 L822.52,434.12 L824.04,439.11 L825.56,444.03 L827.09,448.88 L828.61,453.65 L830.14,458.35 L831.66,462.98 L833.18,467.54 L834.71,472.04 L836.23,476.46 L837.76,480.81 L839.28,485.09 L840.80,489.30 L842.33,493.45 L843.85,497.52 L845.38,501.53 L846.90,505.47 L848.42,509.35 L849.95,513.16 L851.47,516.90 L853.00,520.57 L854.52,524.18 L856.04,527.73 L857.57,531.21 L859.09,534.62 L860.62,537.97 L862.14,541.26 L863.66,544.48 L865.19,547.65 L866.71,550.74 L868.24,553.78 L869.76,556.75 L871.28,559.66 L872.81,562.51 L874.33,565.30 L875.86,568.03 L877.38,570.70 L878.90,573.31 L880.43,575.86 L881.95,578.35 L883.48,580.78 L885.00,583.15 L886.52,585.47 L888.05,587.72 L889.57,589.92 L891.10,592.06 L892.62,594.15 L894.14,596.18 L895.67,598.15 L897.19,600.07 L898.72,601.93 L900.24,603.74 L901.76,605.49 L903.29,607.19 L904.81,608.83 L906.34,610.42 L907.86,611.96 L909.38,613.44 L910.91,614.88 L912.43,616.26 L913.96,617.59 L915.48,618.86 L917.00,620.09 L918.53,621.27 L920.05,622.39 L921.58,623.47 L923.10,624.49 L924.62,625.47 L926.15,626.40 L927.67,627.28 L929.20,628.11 L930.72,628.89 L932.24,629.62 L933.77,630.31 L935.29,630.96 L936.82,631.55 L938.34,632.10 L939.86,632.60 L941.39,633.06 L942.91,633.48 L944.44,633.84 L945.96,634.17 L947.48,634.45 L949.01,634.69 L950.53,634.88 L952.06,635.03 L953.58,635.14 L955.10,635.21 L956.63,635.23 L958.15,635.22 L959.68,635.16 L961.20,635.06 L962.72,634.92 L964.25,634.74 L965.77,634.52 L967.30,634.27 L968.82,633.97 L970.34,633.63 L971.87,633.26 L973.39,632.85 L974.92,632.40 L976.44,631.91 L977.96,631.39 L979.49,630.83 L981.01,630.24 L982.54,629.61 L984.06,628.94 L985.58,628.24 L987.11,627.50 L988.63,626.73 L990.16,625.93 L991.68,625.09 L993.20,624.22 L994.73,623.32 L996.25,622.38 L997.78,621.41 L999.30,620.41 L1000.82,619.38 L1002.35,618.32 L1003.87,617.23 L1005.40,616.10 L1006.92,614.95 L1008.44,613.76 L1009.97,612.55 L1011.49,611.31 L1013.02,610.04 L1014.54,608.74 L1016.06,607.42 L1017.59,606.06 L1019.11,604.68 L1020.64,603.27 L1022.16,601.84 L1023.68,600.38 L1025.21,598.89 L1026.73,597.38 L1028.26,595.84 L1029.78,594.28 L1031.30,592.70 L1032.83,591.09 L1034.35,589.45 L1035.88,587.80 L1037.40,586.12 L1038.92,584.42 L1040.45,582.69 L1041.97,580.95 L1043.50,579.18 L1045.02,577.39 L1046.54,575.58 L1048.07,573.75 L1049.59,571.90 L1051.12,570.03 L1052.64,568.14 L1054.16,566.23 L1055.69,564.31 L1057.21,562.36 L1058.74,560.40 L1060.26,558.42 L1061.78,556.42 L1063.31,554.41 L1064.83,552.38 L1066.36,550.33 L1067.88,548.27 L1069.40,546.19 L1070.93,544.10 L1072.45,541.99 L1073.98,539.87 L1075.50,537.73 L1077.02,535.58 L1078.55,533.42 L1080.07,531.24 L1081.60,529.05 L1083.12,526.85 L1084.64,524.64 L1086.17,522.42 L1087.69,520.18 L1089.22,517.93 L1090.74,515.68 L1092.26,513.41 L1093.79,511.13 L1095.31,508.85 L1096.84,506.55 L1098.36,504.25 L1099.88,501.94 L1101.41,499.62 L1102.93,497.29 L1104.46,494.96 L1105.98,492.62 L1107.50,490.27 L1109.03,487.91 L1110.55,485.55 L1112.08,483.19 L1113.60,480.82 L1115.12,478.44 L1116.65,476.06 L1118.17,473.68 L1119.70,471.29 L1121.22,468.90 L1122.74,466.51 L1124.27,464.11 L1125.79,461.71 L1127.32,459.31 L1128.84,456.91 L1130.36,454.51 L1131.89,452.10 L1133.41,449.70 L1134.94,447.29 L1136.46,444.89 L1137.98,442.49 L1139.51,440.08 L1141.03,437.68 L1142.56,435.28 L1144.08,432.88 L1145.60,430.49 L1147.13,428.10 L1148.65,425.71 L1150.18,423.32 L1151.70,420.94 L1153.22,418.56 L1154.75,416.19 L1156.27,413.82 L1157.80,411.45 L1159.32,409.10 L1160.84,406.74 L1162.37,404.40 L1163.89,402.06 L1165.42,399.73 L1166.94,397.40 L1168.46,395.08 L1169.99,392.78 L1171.51,390.47 L1173.04,388.18 L1174.56,385.90 L1176.08,383.63 L1177.61,381.36 L1179.13,379.11 L1180.66,376.87 L1182.18,374.64 L1183.70,372.42 L1185.23,370.21 L1186.75,368.01 L1188.28,365.83 L1189.80,363.65 L1191.32,361.49 L1192.85,359.35 L1194.37,357.22 L1195.90,355.10 L1197.42,353.00 L1198.94,350.91 L1200.47,348.84 L1201.99,346.78 L1203.52,344.74 L1205.04,342.71 L1206.56,340.70 L1208.09,338.71 L1209.61,336.74 L1211.14,334.78 L1212.66,332.84 L1214.18,330.92 L1215.71,329.02 L1217.23,327.14 L1218.76,325.28 L1220.28,323.43 L1221.80,321.61 L1223.33,319.81 L1224.85,318.03 L1226.38,316.27 L1227.90,314.53 L1229.42,312.81 L1230.95,311.12 L1232.47,309.44 L1234.00,307.79 L1235.52,306.17 L1237.04,304.57 L1238.57,302.99 L1240.09,301.44 L1241.62,299.91 L1243.14,298.41 L1244.66,296.93 L1246.19,295.48 L1247.71,294.05 L1249.24,292.65 L1250.76,291.28 L1252.28,289.93 L1253.81,288.62 L1255.33,287.33 L1256.86,286.07 L1258.38,284.83 L1259.90,283.63 L1261.43,282.46 L1262.95,281.31 L1264.48,280.20 L1266.00,279.12 L1267.52,278.07 L1269.05,277.04 L1270.57,276.05 L1272.10,275.10 L1273.62,274.17 L1275.14,273.28 L1276.67,272.42 L1278.19,271.59 L1279.72,270.80 L1281.24,270.04 L1282.76,269.32 L1284.29,268.63 L1285.81,267.97 L1287.34,267.35 L1288.86,266.77 L1290.38,266.22 L1291.91,265.71 L1293.43,265.24 L1294.96,264.80 L1296.48,264.41 L1298.00,264.04 L1299.53,263.72 L1301.05,263.44 L1302.58,263.19 L1304.10,262.99 L1305.62,262.82 L1307.15,262.70 L1308.67,262.61 L1310.20,262.57 L1311.72,262.57 L1313.24,262.60 L1314.77,262.69 L1316.29,262.81 L1317.82,262.97 L1319.34,263.18 L1320.86,263.43 L1322.39,263.73 L1323.91,264.07 L1325.44,264.45 L1326.96,264.88 L1328.48,265.35 L1330.01,265.87 L1331.53,266.44 L1333.06,267.05 L1334.58,267.71 L1336.10,268.41 L1337.63,269.16 L1339.15,269.96 L1340.68,270.81 L1342.20,271.70 L1343.72,272.65 L1345.25,273.64 L1346.77,274.68 L1348.30,275.77 L1349.82,276.92 L1351.34,278.11 L1352.87,279.35 L1354.39,280.65 L1355.92,281.99 L1357.44,283.39 L1358.96,284.84 L1360.49,286.34 L1362.01,287.90 L1363.54,289.51 L1365.06,291.17 L1366.58,292.88 L1368.11,294.65 L1369.63,296.48 L1371.16,298.36 L1372.68,300.30 L1374.20,302.29 L1375.73,304.34 L1377.25,306.44 L1378.78,308.60 L1380.30,310.82 L1381.82,313.09 L1383.35,315.43 L1384.87,317.82 L1386.40,320.27 L1387.92,322.78 L1389.44,325.35 L1390.97,327.98 L1392.49,330.67 L1394.02,333.41 L1395.54,336.22 L1397.06,339.09 L1398.59,342.03 L1400.11,345.02 L1401.64,348.08 L1403.16,351.20 L1404.68,354.38 L1406.21,357.62 L1407.73,360.93 L1409.26,364.30 L1410.78,367.74 L1412.30,371.24 L1413.83,374.81 L1415.35,378.44 L1416.88,382.14 L1418.40,385.90" stroke="#a399e8" stroke-width="1.45" fill="none"/>
<path d="M199.20,552.12 L200.72,549.22 L202.25,546.33 L203.77,543.46 L205.30,540.61 L206.82,537.77 L208.34,534.95 L209.87,532.14 L211.39,529.35 L212.92,526.57 L214.44,523.81 L215.96,521.07 L217.49,518.34 L219.01,515.62 L220.54,512.92 L222.06,510.24 L223.58,507.57 L225.11,504.92 L226.63,502.29 L228.16,499.67 L229.68,497.06 L231.20,494.47 L232.73,491.90 L234.25,489.34 L235.78,486.80 L237.30,484.27 L238.82,481.76 L240.35,479.26 L241.87,476.78 L243.40,474.32 L244.92,471.87 L246.44,469.43 L247.97,467.02 L249.49,464.61 L251.02,462.23 L252.54,459.86 L254.06,457.50 L255.59,455.16 L257.11,452.84 L258.64,450.53 L260.16,448.23 L261.68,445.96 L263.21,443.69 L264.73,441.45 L266.26,439.22 L267.78,437.00 L269.30,434.80 L270.83,432.62 L272.35,430.45 L273.88,428.29 L275.40,426.16 L276.92,424.03 L278.45,421.93 L279.97,419.84 L281.50,417.76 L283.02,415.70 L284.54,413.66 L286.07,411.63 L287.59,409.62 L289.12,407.62 L290.64,405.64 L292.16,403.67 L293.69,401.72 L295.21,399.79 L296.74,397.87 L298.26,395.96 L299.78,394.08 L301.31,392.20 L302.83,390.35 L304.36,388.50 L305.88,386.68 L307.40,384.87 L308.93,383.07 L310.45,381.30 L311.98,379.53 L313.50,377.78 L315.02,376.05 L316.55,374.33 L318.07,372.63 L319.60,370.95 L321.12,369.28 L322.64,367.62 L324.17,365.98 L325.69,364.36 L327.22,362.75 L328.74,361.16 L330.26,359.59 L331.79,358.02 L333.31,356.48 L334.84,354.95 L336.36,353.43 L337.88,351.94 L339.41,350.45 L340.93,348.99 L342.46,347.53 L343.98,346.10 L345.50,344.68 L347.03,343.27 L348.55,341.88 L350.08,340.51 L351.60,339.15 L353.12,337.81 L354.65,336.48 L356.17,335.17 L357.70,333.87 L359.22,332.59 L360.74,331.33 L362.27,330.08 L363.79,328.84 L365.32,327.63 L366.84,326.42 L368.36,325.24 L369.89,324.07 L371.41,322.91 L372.94,321.77 L374.46,320.65 L375.98,319.54 L377.51,318.44 L379.03,317.36 L380.56,316.30 L382.08,315.26 L383.60,314.22 L385.13,313.21 L386.65,312.21 L388.18,311.23 L389.70,310.26 L391.22,309.30 L392.75,308.37 L394.27,307.44 L395.80,306.54 L397.32,305.65 L398.84,304.77 L400.37,303.91 L401.89,303.07 L403.42,302.24 L404.94,301.43 L406.46,300.63 L407.99,299.85 L409.51,299.08 L411.04,298.33 L412.56,297.59 L414.08,296.88 L415.61,296.17 L417.13,295.48 L418.66,294.81 L420.18,294.15 L421.70,293.51 L423.23,292.89 L424.75,292.28 L426.28,291.68 L427.80,291.10 L429.32,290.54 L430.85,289.99 L432.37,289.46 L433.90,288.94 L435.42,288.44 L436.94,287.95 L438.47,287.48 L439.99,287.03 L441.52,286.59 L443.04,286.17 L444.56,285.76 L446.09,285.37 L447.61,284.99 L449.14,284.63 L450.66,284.28 L452.18,283.95 L453.71,283.64 L455.23,283.34 L456.76,283.06 L458.28,282.79 L459.80,282.54 L461.33,282.30 L462.85,282.08 L464.38,281.88 L465.90,281.69 L467.42,281.51 L468.95,281.35 L470.47,281.21 L472.00,281.08 L473.52,280.97 L475.04,280.88 L476.57,280.80 L478.09,280.73 L479.62,280.68 L481.14,280.65 L482.66,280.63 L484.19,280.63 L485.71,280.64 L487.24,280.67 L488.76,280.71 L490.28,280.77 L491.81,280.85 L493.33,280.94 L494.86,281.05 L496.38,281.17 L497.90,281.31 L499.43,281.46 L500.95,281.63 L502.48,281.81 L504.00,282.01 L505.52,282.23 L507.05,282.46 L508.57,282.71 L510.10,282.97 L511.62,283.25 L513.14,283.54 L514.67,283.85 L516.19,284.17 L517.72,284.51 L519.24,284.87 L520.76,285.24 L522.29,285.63 L523.81,286.03 L525.34,286.45 L526.86,286.88 L528.38,287.33 L529.91,287.80 L531.43,288.28 L532.96,288.77 L534.48,289.28 L536.00,289.81 L537.53,290.35 L539.05,290.91 L540.58,291.49 L542.10,292.08 L543.62,292.68 L545.15,293.30 L546.67,293.94 L548.20,294.59 L549.72,295.26 L551.24,295.94 L552.77,296.64 L554.29,297.35 L555.82,298.08 L557.34,298.83 L558.86,299.59 L560.39,300.37 L561.91,301.16 L563.44,301.97 L564.96,302.79 L566.48,303.63 L568.01,304.48 L569.53,305.35 L571.06,306.24 L572.58,307.14 L574.10,308.06 L575.63,308.99 L577.15,309.94 L578.68,310.90 L580.20,311.88 L581.72,312.87 L583.25,313.88 L584.77,314.91 L586.30,315.95 L587.82,317.01 L589.34,318.08 L590.87,319.17 L592.39,320.27 L593.92,321.39 L595.44,322.53 L596.96,323.68 L598.49,324.84 L600.01,326.03 L601.54,327.22 L603.06,328.44 L604.58,329.67 L606.11,330.91 L607.63,332.17 L609.16,333.44 L610.68,334.74 L612.20,336.04 L613.73,337.36 L615.25,338.70 L616.78,340.05 L618.30,341.42 L619.82,342.81 L621.35,344.21 L622.87,345.62 L624.40,347.05 L625.92,348.50 L627.44,349.96 L628.97,351.44 L630.49,352.93 L632.02,354.44 L633.54,355.97 L635.06,357.51 L636.59,359.06 L638.11,360.63 L639.64,362.22 L641.16,363.82 L642.68,365.44 L644.21,367.08 L645.73,368.72 L647.26,370.39 L648.78,372.07 L650.30,373.77 L651.83,375.48 L653.35,377.20 L654.88,378.95 L656.40,380.71 L657.92,382.48 L659.45,384.27 L660.97,386.07 L662.50,387.89 L664.02,389.73 L665.54,391.58 L667.07,393.45 L668.59,395.33 L670.12,397.23 L671.64,399.15 L673.16,401.08 L674.69,403.02 L676.21,404.98 L677.74,406.96 L679.26,408.95 L680.78,410.96 L682.31,412.98 L683.83,415.02 L685.36,417.07 L686.88,419.14 L688.40,421.23 L689.93,423.33 L691.45,425.45 L692.98,427.58 L694.50,429.73 L696.02,431.89 L697.55,434.07 L699.07,436.27 L700.60,438.48 L702.12,440.70 L703.64,442.94 L705.17,445.20 L706.69,447.47 L708.22,449.76 L709.74,452.06 L711.26,454.38 L712.79,456.72 L714.31,459.07 L715.84,461.43 L717.36,463.82 L718.88,466.21 L720.41,468.63 L721.93,471.05 L723.46,473.50 L724.98,475.96 L726.50,478.43 L728.03,480.92 L729.55,483.43 L731.08,485.95 L732.60,488.49 L734.12,491.04 L735.65,493.61 L737.17,496.20 L738.70,498.80 L740.22,501.41 L741.74,504.04 L743.27,506.69 L744.79,509.35 L746.32,512.03 L747.84,514.72 L749.36,517.43 L750.89,520.15 L752.41,522.89 L753.94,525.65 L755.46,528.42 L756.98,531.21 L758.51,534.01 L760.03,536.83 L761.56,539.66 L763.08,542.51 L764.60,545.38 L766.13,548.26 L767.65,551.15 L769.18,554.06 L770.70,556.99 L772.22,559.93 L773.75,562.89 L775.27,565.87 L776.80,568.85 L778.32,571.86 L779.84,574.88 L781.37,577.92 L782.89,580.97 L784.42,584.04 L785.94,587.12 L787.46,590.22 L788.99,593.33 L790.51,596.46 L792.04,599.61 L793.56,602.77 L795.08,605.94 L796.61,609.14 L798.13,612.34 L799.66,615.57 L801.18,618.80 L802.70,622.06 L804.23,625.33 L805.75,628.61 L807.28,631.92 L808.80,635.23 L810.32,631.92 L811.85,628.61 L813.37,625.33 L814.90,622.06 L816.42,618.80 L817.94,615.57 L819.47,612.34 L820.99,609.14 L822.52,605.94 L824.04,602.77 L825.56,599.61 L827.09,596.46 L828.61,593.33 L830.14,590.22 L831.66,587.12 L833.18,584.04 L834.71,580.97 L836.23,577.92 L837.76,574.88 L839.28,571.86 L840.80,568.85 L842.33,565.87 L843.85,562.89 L845.38,559.93 L846.90,556.99 L848.42,554.06 L849.95,551.15 L851.47,548.26 L853.00,545.38 L854.52,542.51 L856.04,539.66 L857.57,536.83 L859.09,534.01 L860.62,531.21 L862.14,528.42 L863.66,525.65 L865.19,522.89 L866.71,520.15 L868.24,517.43 L869.76,514.72 L871.28,512.03 L872.81,509.35 L874.33,506.69 L875.86,504.04 L877.38,501.41 L878.90,498.80 L880.43,496.20 L881.95,493.61 L883.48,491.04 L885.00,488.49 L886.52,485.95 L888.05,483.43 L889.57,480.92 L891.10,478.43 L892.62,475.96 L894.14,473.50 L895.67,471.05 L897.19,468.63 L898.72,466.21 L900.24,463.82 L901.76,461.43 L903.29,459.07 L904.81,456.72 L906.34,454.38 L907.86,452.06 L909.38,449.76 L910.91,447.47 L912.43,445.20 L913.96,442.94 L915.48,440.70 L917.00,438.48 L918.53,436.27 L920.05,434.07 L921.58,431.89 L923.10,429.73 L924.62,427.58 L926.15,425.45 L927.67,423.33 L929.20,421.23 L930.72,419.14 L932.24,417.07 L933.77,415.02 L935.29,412.98 L936.82,410.96 L938.34,408.95 L939.86,406.96 L941.39,404.98 L942.91,403.02 L944.44,401.08 L945.96,399.15 L947.48,397.23 L949.01,395.33 L950.53,393.45 L952.06,391.58 L953.58,389.73 L955.10,387.89 L956.63,386.07 L958.15,384.27 L959.68,382.48 L961.20,380.71 L962.72,378.95 L964.25,377.20 L965.77,375.48 L967.30,373.77 L968.82,372.07 L970.34,370.39 L971.87,368.72 L973.39,367.08 L974.92,365.44 L976.44,363.82 L977.96,362.22 L979.49,360.63 L981.01,359.06 L982.54,357.51 L984.06,355.97 L985.58,354.44 L987.11,352.93 L988.63,351.44 L990.16,349.96 L991.68,348.50 L993.20,347.05 L994.73,345.62 L996.25,344.21 L997.78,342.81 L999.30,341.42 L1000.82,340.05 L1002.35,338.70 L1003.87,337.36 L1005.40,336.04 L1006.92,334.74 L1008.44,333.44 L1009.97,332.17 L1011.49,330.91 L1013.02,329.67 L1014.54,328.44 L1016.06,327.22 L1017.59,326.03 L1019.11,324.84 L1020.64,323.68 L1022.16,322.53 L1023.68,321.39 L1025.21,320.27 L1026.73,319.17 L1028.26,318.08 L1029.78,317.01 L1031.30,315.95 L1032.83,314.91 L1034.35,313.88 L1035.88,312.87 L1037.40,311.88 L1038.92,310.90 L1040.45,309.94 L1041.97,308.99 L1043.50,308.06 L1045.02,307.14 L1046.54,306.24 L1048.07,305.35 L1049.59,304.48 L1051.12,303.63 L1052.64,302.79 L1054.16,301.97 L1055.69,301.16 L1057.21,300.37 L1058.74,299.59 L1060.26,298.83 L1061.78,298.08 L1063.31,297.35 L1064.83,296.64 L1066.36,295.94 L1067.88,295.26 L1069.40,294.59 L1070.93,293.94 L1072.45,293.30 L1073.98,292.68 L1075.50,292.08 L1077.02,291.49 L1078.55,290.91 L1080.07,290.35 L1081.60,289.81 L1083.12,289.28 L1084.64,288.77 L1086.17,288.28 L1087.69,287.80 L1089.22,287.33 L1090.74,286.88 L1092.26,286.45 L1093.79,286.03 L1095.31,285.63 L1096.84,285.24 L1098.36,284.87 L1099.88,284.51 L1101.41,284.17 L1102.93,283.85 L1104.46,283.54 L1105.98,283.25 L1107.50,282.97 L1109.03,282.71 L1110.55,282.46 L1112.08,282.23 L1113.60,282.01 L1115.12,281.81 L1116.65,281.63 L1118.17,281.46 L1119.70,281.31 L1121.22,281.17 L1122.74,281.05 L1124.27,280.94 L1125.79,280.85 L1127.32,280.77 L1128.84,280.71 L1130.36,280.67 L1131.89,280.64 L1133.41,280.63 L1134.94,280.63 L1136.46,280.65 L1137.98,280.68 L1139.51,280.73 L1141.03,280.80 L1142.56,280.88 L1144.08,280.97 L1145.60,281.08 L1147.13,281.21 L1148.65,281.35 L1150.18,281.51 L1151.70,281.69 L1153.22,281.88 L1154.75,282.08 L1156.27,282.30 L1157.80,282.54 L1159.32,282.79 L1160.84,283.06 L1162.37,283.34 L1163.89,283.64 L1165.42,283.95 L1166.94,284.28 L1168.46,284.63 L1169.99,284.99 L1171.51,285.37 L1173.04,285.76 L1174.56,286.17 L1176.08,286.59 L1177.61,287.03 L1179.13,287.48 L1180.66,287.95 L1182.18,288.44 L1183.70,288.94 L1185.23,289.46 L1186.75,289.99 L1188.28,290.54 L1189.80,291.10 L1191.32,291.68 L1192.85,292.28 L1194.37,292.89 L1195.90,293.51 L1197.42,294.15 L1198.94,294.81 L1200.47,295.48 L1201.99,296.17 L1203.52,296.88 L1205.04,297.59 L1206.56,298.33 L1208.09,299.08 L1209.61,299.85 L1211.14,300.63 L1212.66,301.43 L1214.18,302.24 L1215.71,303.07 L1217.23,303.91 L1218.76,304.77 L1220.28,305.65 L1221.80,306.54 L1223.33,307.44 L1224.85,308.37 L1226.38,309.30 L1227.90,310.26 L1229.42,311.23 L1230.95,312.21 L1232.47,313.21 L1234.00,314.22 L1235.52,315.26 L1237.04,316.30 L1238.57,317.36 L1240.09,318.44 L1241.62,319.54 L1243.14,320.65 L1244.66,321.77 L1246.19,322.91 L1247.71,324.07 L1249.24,325.24 L1250.76,326.42 L1252.28,327.63 L1253.81,328.84 L1255.33,330.08 L1256.86,331.33 L1258.38,332.59 L1259.90,333.87 L1261.43,335.17 L1262.95,336.48 L1264.48,337.81 L1266.00,339.15 L1267.52,340.51 L1269.05,341.88 L1270.57,343.27 L1272.10,344.68 L1273.62,346.10 L1275.14,347.53 L1276.67,348.99 L1278.19,350.45 L1279.72,351.94 L1281.24,353.43 L1282.76,354.95 L1284.29,356.48 L1285.81,358.02 L1287.34,359.59 L1288.86,361.16 L1290.38,362.75 L1291.91,364.36 L1293.43,365.98 L1294.96,367.62 L1296.48,369.28 L1298.00,370.95 L1299.53,372.63 L1301.05,374.33 L1302.58,376.05 L1304.10,377.78 L1305.62,379.53 L1307.15,381.30 L1308.67,383.07 L1310.20,384.87 L1311.72,386.68 L1313.24,388.50 L1314.77,390.35 L1316.29,392.20 L1317.82,394.08 L1319.34,395.96 L1320.86,397.87 L1322.39,399.79 L1323.91,401.72 L1325.44,403.67 L1326.96,405.64 L1328.48,407.62 L1330.01,409.62 L1331.53,411.63 L1333.06,413.66 L1334.58,415.70 L1336.10,417.76 L1337.63,419.84 L1339.15,421.93 L1340.68,424.03 L1342.20,426.16 L1343.72,428.29 L1345.25,430.45 L1346.77,432.62 L1348.30,434.80 L1349.82,437.00 L1351.34,439.22 L1352.87,441.45 L1354.39,443.69 L1355.92,445.96 L1357.44,448.23 L1358.96,450.53 L1360.49,452.84 L1362.01,455.16 L1363.54,457.50 L1365.06,459.86 L1366.58,462.23 L1368.11,464.61 L1369.63,467.02 L1371.16,469.43 L1372.68,471.87 L1374.20,474.32 L1375.73,476.78 L1377.25,479.26 L1378.78,481.76 L1380.30,484.27 L1381.82,486.80 L1383.35,489.34 L1384.87,491.90 L1386.40,494.47 L1387.92,497.06 L1389.44,499.67 L1390.97,502.29 L1392.49,504.92 L1394.02,507.57 L1395.54,510.24 L1397.06,512.92 L1398.59,515.62 L1400.11,518.34 L1401.64,521.07 L1403.16,523.81 L1404.68,526.57 L1406.21,529.35 L1407.73,532.14 L1409.26,534.95 L1410.78,537.77 L1412.30,540.61 L1413.83,543.46 L1415.35,546.33 L1416.88,549.22 L1418.40,552.12" stroke="#c46af0" stroke-width="1.45" fill="none"/>
<path d="M199.20,385.90 L200.72,385.90 L202.25,385.90 L203.77,385.90 L205.30,385.90 L206.82,385.91 L208.34,385.92 L209.87,385.93 L211.39,385.94 L212.92,385.96 L214.44,385.98 L215.96,386.00 L217.49,386.03 L219.01,386.06 L220.54,386.10 L222.06,386.15 L223.58,386.20 L225.11,386.26 L226.63,386.32 L228.16,386.40 L229.68,386.48 L231.20,386.56 L232.73,386.66 L234.25,386.77 L235.78,386.88 L237.30,387.00 L238.82,387.13 L240.35,387.27 L241.87,387.43 L243.40,387.59 L244.92,387.76 L246.44,387.94 L247.97,388.14 L249.49,388.34 L251.02,388.56 L252.54,388.78 L254.06,389.02 L255.59,389.27 L257.11,389.54 L258.64,389.81 L260.16,390.10 L261.68,390.40 L263.21,390.72 L264.73,391.05 L266.26,391.39 L267.78,391.74 L269.30,392.11 L270.83,392.49 L272.35,392.89 L273.88,393.30 L275.40,393.72 L276.92,394.16 L278.45,394.61 L279.97,395.08 L281.50,395.56 L283.02,396.05 L284.54,396.56 L286.07,397.09 L287.59,397.63 L289.12,398.18 L290.64,398.75 L292.16,399.34 L293.69,399.94 L295.21,400.56 L296.74,401.19 L298.26,401.83 L299.78,402.49 L301.31,403.17 L302.83,403.86 L304.36,404.57 L305.88,405.29 L307.40,406.03 L308.93,406.79 L310.45,407.55 L311.98,408.34 L313.50,409.14 L315.02,409.95 L316.55,410.78 L318.07,411.63 L319.60,412.49 L321.12,413.37 L322.64,414.26 L324.17,415.16 L325.69,416.09 L327.22,417.02 L328.74,417.97 L330.26,418.94 L331.79,419.92 L333.31,420.92 L334.84,421.93 L336.36,422.95 L337.88,423.99 L339.41,425.04 L340.93,426.11 L342.46,427.19 L343.98,428.29 L345.50,429.40 L347.03,430.52 L348.55,431.66 L350.08,432.81 L351.60,433.97 L353.12,435.15 L354.65,436.34 L356.17,437.55 L357.70,438.76 L359.22,439.99 L360.74,441.23 L362.27,442.49 L363.79,443.76 L365.32,445.04 L366.84,446.33 L368.36,447.63 L369.89,448.94 L371.41,450.27 L372.94,451.61 L374.46,452.95 L375.98,454.31 L377.51,455.68 L379.03,457.06 L380.56,458.45 L382.08,459.86 L383.60,461.27 L385.13,462.69 L386.65,464.12 L388.18,465.56 L389.70,467.00 L391.22,468.46 L392.75,469.93 L394.27,471.40 L395.80,472.89 L397.32,474.38 L398.84,475.87 L400.37,477.38 L401.89,478.89 L403.42,480.41 L404.94,481.94 L406.46,483.48 L407.99,485.02 L409.51,486.56 L411.04,488.12 L412.56,489.67 L414.08,491.24 L415.61,492.81 L417.13,494.38 L418.66,495.96 L420.18,497.54 L421.70,499.13 L423.23,500.72 L424.75,502.31 L426.28,503.91 L427.80,505.51 L429.32,507.11 L430.85,508.72 L432.37,510.32 L433.90,511.93 L435.42,513.54 L436.94,515.16 L438.47,516.77 L439.99,518.39 L441.52,520.00 L443.04,521.62 L444.56,523.23 L446.09,524.85 L447.61,526.46 L449.14,528.08 L450.66,529.69 L452.18,531.30 L453.71,532.91 L455.23,534.52 L456.76,536.12 L458.28,537.73 L459.80,539.33 L461.33,540.92 L462.85,542.52 L464.38,544.11 L465.90,545.69 L467.42,547.27 L468.95,548.85 L470.47,550.42 L472.00,551.98 L473.52,553.55 L475.04,555.10 L476.57,556.65 L478.09,558.19 L479.62,559.73 L481.14,561.25 L482.66,562.77 L484.19,564.29 L485.71,565.79 L487.24,567.29 L488.76,568.78 L490.28,570.26 L491.81,571.73 L493.33,573.19 L494.86,574.64 L496.38,576.08 L497.90,577.51 L499.43,578.93 L500.95,580.34 L502.48,581.74 L504.00,583.13 L505.52,584.50 L507.05,585.86 L508.57,587.21 L510.10,588.55 L511.62,589.88 L513.14,591.19 L514.67,592.48 L516.19,593.77 L517.72,595.04 L519.24,596.29 L520.76,597.53 L522.29,598.76 L523.81,599.97 L525.34,601.16 L526.86,602.34 L528.38,603.50 L529.91,604.65 L531.43,605.78 L532.96,606.89 L534.48,607.98 L536.00,609.06 L537.53,610.12 L539.05,611.16 L540.58,612.18 L542.10,613.19 L543.62,614.17 L545.15,615.14 L546.67,616.08 L548.20,617.01 L549.72,617.92 L551.24,618.80 L552.77,619.67 L554.29,620.51 L555.82,621.34 L557.34,622.14 L558.86,622.92 L560.39,623.68 L561.91,624.42 L563.44,625.14 L564.96,625.83 L566.48,626.50 L568.01,627.15 L569.53,627.77 L571.06,628.37 L572.58,628.95 L574.10,629.50 L575.63,630.03 L577.15,630.53 L578.68,631.01 L580.20,631.47 L581.72,631.90 L583.25,632.31 L584.77,632.69 L586.30,633.04 L587.82,633.37 L589.34,633.67 L590.87,633.95 L592.39,634.20 L593.92,634.42 L595.44,634.62 L596.96,634.79 L598.49,634.93 L600.01,635.05 L601.54,635.13 L603.06,635.19 L604.58,635.23 L606.11,635.23 L607.63,635.21 L609.16,635.16 L610.68,635.08 L612.20,634.97 L613.73,634.83 L615.25,634.66 L616.78,634.47 L618.30,634.24 L619.82,633.99 L621.35,633.71 L622.87,633.40 L624.40,633.05 L625.92,632.68 L627.44,632.28 L628.97,631.85 L630.49,631.39 L632.02,630.90 L633.54,630.37 L635.06,629.82 L636.59,629.24 L638.11,628.63 L639.64,627.98 L641.16,627.31 L642.68,626.61 L644.21,625.87 L645.73,625.10 L647.26,624.31 L648.78,623.48 L650.30,622.62 L651.83,621.73 L653.35,620.81 L654.88,619.86 L656.40,618.87 L657.92,617.86 L659.45,616.81 L660.97,615.74 L662.50,614.63 L664.02,613.49 L665.54,612.32 L667.07,611.12 L668.59,609.89 L670.12,608.63 L671.64,607.34 L673.16,606.01 L674.69,604.66 L676.21,603.27 L677.74,601.85 L679.26,600.40 L680.78,598.93 L682.31,597.42 L683.83,595.88 L685.36,594.31 L686.88,592.71 L688.40,591.08 L689.93,589.42 L691.45,587.72 L692.98,586.00 L694.50,584.25 L696.02,582.47 L697.55,580.66 L699.07,578.82 L700.60,576.95 L702.12,575.05 L703.64,573.13 L705.17,571.17 L706.69,569.19 L708.22,567.17 L709.74,565.13 L711.26,563.06 L712.79,560.96 L714.31,558.84 L715.84,556.68 L717.36,554.50 L718.88,552.29 L720.41,550.06 L721.93,547.80 L723.46,545.51 L724.98,543.19 L726.50,540.85 L728.03,538.49 L729.55,536.10 L731.08,533.68 L732.60,531.24 L734.12,528.77 L735.65,526.28 L737.17,523.77 L738.70,521.23 L740.22,518.67 L741.74,516.08 L743.27,513.48 L744.79,510.85 L746.32,508.20 L747.84,505.52 L749.36,502.83 L750.89,500.11 L752.41,497.38 L753.94,494.62 L755.46,491.85 L756.98,489.05 L758.51,486.24 L760.03,483.40 L761.56,480.55 L763.08,477.68 L764.60,474.80 L766.13,471.90 L767.65,468.98 L769.18,466.04 L770.70,463.09 L772.22,460.13 L773.75,457.15 L775.27,454.15 L776.80,451.15 L778.32,448.13 L779.84,445.10 L781.37,442.05 L782.89,439.00 L784.42,435.93 L785.94,432.85 L787.46,429.77 L788.99,426.67 L790.51,423.57 L792.04,420.46 L793.56,417.34 L795.08,414.22 L796.61,411.09 L798.13,407.95 L799.66,404.81 L801.18,401.66 L802.70,398.52 L804.23,395.36 L805.75,392.21 L807.28,389.06 L808.80,385.90 L810.32,382.74 L811.85,379.59 L813.37,376.44 L814.90,373.28 L816.42,370.14 L817.94,366.99 L819.47,363.85 L820.99,360.71 L822.52,357.58 L824.04,354.46 L825.56,351.34 L827.09,348.23 L828.61,345.13 L830.14,342.03 L831.66,338.95 L833.18,335.87 L834.71,332.80 L836.23,329.75 L837.76,326.70 L839.28,323.67 L840.80,320.65 L842.33,317.65 L843.85,314.65 L845.38,311.67 L846.90,308.71 L848.42,305.76 L849.95,302.82 L851.47,299.90 L853.00,297.00 L854.52,294.12 L856.04,291.25 L857.57,288.40 L859.09,285.56 L860.62,282.75 L862.14,279.95 L863.66,277.18 L865.19,274.42 L866.71,271.69 L868.24,268.97 L869.76,266.28 L871.28,263.60 L872.81,260.95 L874.33,258.32 L875.86,255.72 L877.38,253.13 L878.90,250.57 L880.43,248.03 L881.95,245.52 L883.48,243.03 L885.00,240.56 L886.52,238.12 L888.05,235.70 L889.57,233.31 L891.10,230.95 L892.62,228.61 L894.14,226.29 L895.67,224.00 L897.19,221.74 L898.72,219.51 L900.24,217.30 L901.76,215.12 L903.29,212.96 L904.81,210.84 L906.34,208.74 L907.86,206.67 L909.38,204.63 L910.91,202.61 L912.43,200.63 L913.96,198.67 L915.48,196.75 L917.00,194.85 L918.53,192.98 L920.05,191.14 L921.58,189.33 L923.10,187.55 L924.62,185.80 L926.15,184.08 L927.67,182.38 L929.20,180.72 L930.72,179.09 L932.24,177.49 L933.77,175.92 L935.29,174.38 L936.82,172.87 L938.34,171.40 L939.86,169.95 L941.39,168.53 L942.91,167.14 L944.44,165.79 L945.96,164.46 L947.48,163.17 L949.01,161.91 L950.53,160.68 L952.06,159.48 L953.58,158.31 L955.10,157.17 L956.63,156.06 L958.15,154.99 L959.68,153.94 L961.20,152.93 L962.72,151.94 L964.25,150.99 L965.77,150.07 L967.30,149.18 L968.82,148.32 L970.34,147.49 L971.87,146.70 L973.39,145.93 L974.92,145.19 L976.44,144.49 L977.96,143.82 L979.49,143.17 L981.01,142.56 L982.54,141.98 L984.06,141.43 L985.58,140.90 L987.11,140.41 L988.63,139.95 L990.16,139.52 L991.68,139.12 L993.20,138.75 L994.73,138.40 L996.25,138.09 L997.78,137.81 L999.30,137.56 L1000.82,137.33 L1002.35,137.14 L1003.87,136.97 L1005.40,136.83 L1006.92,136.72 L1008.44,136.64 L1009.97,136.59 L1011.49,136.57 L1013.02,136.57 L1014.54,136.61 L1016.06,136.67 L1017.59,136.75 L1019.11,136.87 L1020.64,137.01 L1022.16,137.18 L1023.68,137.38 L1025.21,137.60 L1026.73,137.85 L1028.26,138.13 L1029.78,138.43 L1031.30,138.76 L1032.83,139.11 L1034.35,139.49 L1035.88,139.90 L1037.40,140.33 L1038.92,140.79 L1040.45,141.27 L1041.97,141.77 L1043.50,142.30 L1045.02,142.85 L1046.54,143.43 L1048.07,144.03 L1049.59,144.65 L1051.12,145.30 L1052.64,145.97 L1054.16,146.66 L1055.69,147.38 L1057.21,148.12 L1058.74,148.88 L1060.26,149.66 L1061.78,150.46 L1063.31,151.29 L1064.83,152.13 L1066.36,153.00 L1067.88,153.88 L1069.40,154.79 L1070.93,155.72 L1072.45,156.66 L1073.98,157.63 L1075.50,158.61 L1077.02,159.62 L1078.55,160.64 L1080.07,161.68 L1081.60,162.74 L1083.12,163.82 L1084.64,164.91 L1086.17,166.02 L1087.69,167.15 L1089.22,168.30 L1090.74,169.46 L1092.26,170.64 L1093.79,171.83 L1095.31,173.04 L1096.84,174.27 L1098.36,175.51 L1099.88,176.76 L1101.41,178.03 L1102.93,179.32 L1104.46,180.61 L1105.98,181.92 L1107.50,183.25 L1109.03,184.59 L1110.55,185.94 L1112.08,187.30 L1113.60,188.67 L1115.12,190.06 L1116.65,191.46 L1118.17,192.87 L1119.70,194.29 L1121.22,195.72 L1122.74,197.16 L1124.27,198.61 L1125.79,200.07 L1127.32,201.54 L1128.84,203.02 L1130.36,204.51 L1131.89,206.01 L1133.41,207.51 L1134.94,209.03 L1136.46,210.55 L1137.98,212.07 L1139.51,213.61 L1141.03,215.15 L1142.56,216.70 L1144.08,218.25 L1145.60,219.82 L1147.13,221.38 L1148.65,222.95 L1150.18,224.53 L1151.70,226.11 L1153.22,227.69 L1154.75,229.28 L1156.27,230.88 L1157.80,232.47 L1159.32,234.07 L1160.84,235.68 L1162.37,237.28 L1163.89,238.89 L1165.42,240.50 L1166.94,242.11 L1168.46,243.72 L1169.99,245.34 L1171.51,246.95 L1173.04,248.57 L1174.56,250.18 L1176.08,251.80 L1177.61,253.41 L1179.13,255.03 L1180.66,256.64 L1182.18,258.26 L1183.70,259.87 L1185.23,261.48 L1186.75,263.08 L1188.28,264.69 L1189.80,266.29 L1191.32,267.89 L1192.85,269.49 L1194.37,271.08 L1195.90,272.67 L1197.42,274.26 L1198.94,275.84 L1200.47,277.42 L1201.99,278.99 L1203.52,280.56 L1205.04,282.13 L1206.56,283.68 L1208.09,285.24 L1209.61,286.78 L1211.14,288.32 L1212.66,289.86 L1214.18,291.39 L1215.71,292.91 L1217.23,294.42 L1218.76,295.93 L1220.28,297.42 L1221.80,298.91 L1223.33,300.40 L1224.85,301.87 L1226.38,303.34 L1227.90,304.80 L1229.42,306.24 L1230.95,307.68 L1232.47,309.11 L1234.00,310.53 L1235.52,311.94 L1237.04,313.35 L1238.57,314.74 L1240.09,316.12 L1241.62,317.49 L1243.14,318.85 L1244.66,320.19 L1246.19,321.53 L1247.71,322.86 L1249.24,324.17 L1250.76,325.47 L1252.28,326.76 L1253.81,328.04 L1255.33,329.31 L1256.86,330.57 L1258.38,331.81 L1259.90,333.04 L1261.43,334.25 L1262.95,335.46 L1264.48,336.65 L1266.00,337.83 L1267.52,338.99 L1269.05,340.14 L1270.57,341.28 L1272.10,342.40 L1273.62,343.51 L1275.14,344.61 L1276.67,345.69 L1278.19,346.76 L1279.72,347.81 L1281.24,348.85 L1282.76,349.87 L1284.29,350.88 L1285.81,351.88 L1287.34,352.86 L1288.86,353.83 L1290.38,354.78 L1291.91,355.71 L1293.43,356.64 L1294.96,357.54 L1296.48,358.43 L1298.00,359.31 L1299.53,360.17 L1301.05,361.02 L1302.58,361.85 L1304.10,362.66 L1305.62,363.46 L1307.15,364.25 L1308.67,365.01 L1310.20,365.77 L1311.72,366.51 L1313.24,367.23 L1314.77,367.94 L1316.29,368.63 L1317.82,369.31 L1319.34,369.97 L1320.86,370.61 L1322.39,371.24 L1323.91,371.86 L1325.44,372.46 L1326.96,373.05 L1328.48,373.62 L1330.01,374.17 L1331.53,374.71 L1333.06,375.24 L1334.58,375.75 L1336.10,376.24 L1337.63,376.72 L1339.15,377.19 L1340.68,377.64 L1342.20,378.08 L1343.72,378.50 L1345.25,378.91 L1346.77,379.31 L1348.30,379.69 L1349.82,380.06 L1351.34,380.41 L1352.87,380.75 L1354.39,381.08 L1355.92,381.40 L1357.44,381.70 L1358.96,381.99 L1360.49,382.26 L1362.01,382.53 L1363.54,382.78 L1365.06,383.02 L1366.58,383.24 L1368.11,383.46 L1369.63,383.66 L1371.16,383.86 L1372.68,384.04 L1374.20,384.21 L1375.73,384.37 L1377.25,384.53 L1378.78,384.67 L1380.30,384.80 L1381.82,384.92 L1383.35,385.03 L1384.87,385.14 L1386.40,385.24 L1387.92,385.32 L1389.44,385.40 L1390.97,385.48 L1392.49,385.54 L1394.02,385.60 L1395.54,385.65 L1397.06,385.70 L1398.59,385.74 L1400.11,385.77 L1401.64,385.80 L1403.16,385.82 L1404.68,385.84 L1406.21,385.86 L1407.73,385.87 L1409.26,385.88 L1410.78,385.89 L1412.30,385.90 L1413.83,385.90 L1415.35,385.90 L1416.88,385.90 L1418.40,385.90" stroke="#fb5c5c" stroke-width="1.45" fill="none"/>
<path d="M199.2,385.9 H1418.4" stroke="#322a4c" stroke-opacity="0.9" stroke-width="1.9" stroke-dasharray="7 4.04" fill="none"/>
<path d="M195.90,658.55 H199.2 M195.90,656.02 H199.2 M195.90,653.50 H199.2 M193.20,650.97 H199.2 M195.90,648.45 H199.2 M195.90,645.92 H199.2 M195.90,643.40 H199.2 M195.90,640.87 H199.2 M190.50,638.35 H199.2 M195.90,635.83 H199.2 M195.90,633.30 H199.2 M195.90,630.78 H199.2 M195.90,628.25 H199.2 M193.20,625.73 H199.2 M195.90,623.20 H199.2 M195.90,620.68 H199.2 M195.90,618.15 H199.2 M195.90,615.63 H199.2 M190.50,613.11 H199.2 M195.90,610.58 H199.2 M195.90,608.06 H199.2 M195.90,605.53 H199.2 M195.90,603.01 H199.2 M193.20,600.48 H199.2 M195.90,597.96 H199.2 M195.90,595.43 H199.2 M195.90,592.91 H199.2 M195.90,590.38 H199.2 M190.50,587.86 H199.2 M195.90,585.34 H199.2 M195.90,582.81 H199.2 M195.90,580.29 H199.2 M195.90,577.76 H199.2 M193.20,575.24 H199.2 M195.90,572.71 H199.2 M195.90,570.19 H199.2 M195.90,567.66 H199.2 M195.90,565.14 H199.2 M190.50,562.62 H199.2 M195.90,560.09 H199.2 M195.90,557.57 H199.2 M195.90,555.04 H199.2 M195.90,552.52 H199.2 M193.20,549.99 H199.2 M195.90,547.47 H199.2 M195.90,544.94 H199.2 M195.90,542.42 H199.2 M195.90,539.89 H199.2 M190.50,537.37 H199.2 M195.90,534.85 H199.2 M195.90,532.32 H199.2 M195.90,529.80 H199.2 M195.90,527.27 H199.2 M193.20,524.75 H199.2 M195.90,522.22 H199.2 M195.90,519.70 H199.2 M195.90,517.17 H199.2 M195.90,514.65 H199.2 M190.50,512.12 H199.2 M195.90,509.60 H199.2 M195.90,507.08 H199.2 M195.90,504.55 H199.2 M195.90,502.03 H199.2 M193.20,499.50 H199.2 M195.90,496.98 H199.2 M195.90,494.45 H199.2 M195.90,491.93 H199.2 M195.90,489.40 H199.2 M190.50,486.88 H199.2 M195.90,484.36 H199.2 M195.90,481.83 H199.2 M195.90,479.31 H199.2 M195.90,476.78 H199.2 M193.20,474.26 H199.2 M195.90,471.73 H199.2 M195.90,469.21 H199.2 M195.90,466.68 H199.2 M195.90,464.16 H199.2 M190.50,461.63 H199.2 M195.90,459.11 H199.2 M195.90,456.59 H199.2 M195.90,454.06 H199.2 M195.90,451.54 H199.2 M193.20,449.01 H199.2 M195.90,446.49 H199.2 M195.90,443.96 H199.2 M195.90,441.44 H199.2 M195.90,438.91 H199.2 M190.50,436.39 H199.2 M195.90,433.87 H199.2 M195.90,431.34 H199.2 M195.90,428.82 H199.2 M195.90,426.29 H199.2 M193.20,423.77 H199.2 M195.90,421.24 H199.2 M195.90,418.72 H199.2 M195.90,416.19 H199.2 M195.90,413.67 H199.2 M190.50,411.14 H199.2 M195.90,408.62 H199.2 M195.90,406.10 H199.2 M195.90,403.57 H199.2 M195.90,401.05 H199.2 M193.20,398.52 H199.2 M195.90,396.00 H199.2 M195.90,393.47 H199.2 M195.90,390.95 H199.2 M195.90,388.42 H199.2 M190.50,385.90 H199.2 M195.90,383.38 H199.2 M195.90,380.85 H199.2 M195.90,378.33 H199.2 M195.90,375.80 H199.2 M193.20,373.28 H199.2 M195.90,370.75 H199.2 M195.90,368.23 H199.2 M195.90,365.70 H199.2 M195.90,363.18 H199.2 M190.50,360.65 H199.2 M195.90,358.13 H199.2 M195.90,355.61 H199.2 M195.90,353.08 H199.2 M195.90,350.56 H199.2 M193.20,348.03 H199.2 M195.90,345.51 H199.2 M195.90,342.98 H199.2 M195.90,340.46 H199.2 M195.90,337.93 H199.2 M190.50,335.41 H199.2 M195.90,332.89 H199.2 M195.90,330.36 H199.2 M195.90,327.84 H199.2 M195.90,325.31 H199.2 M193.20,322.79 H199.2 M195.90,320.26 H199.2 M195.90,317.74 H199.2 M195.90,315.21 H199.2 M195.90,312.69 H199.2 M190.50,310.16 H199.2 M195.90,307.64 H199.2 M195.90,305.12 H199.2 M195.90,302.59 H199.2 M195.90,300.07 H199.2 M193.20,297.54 H199.2 M195.90,295.02 H199.2 M195.90,292.49 H199.2 M195.90,289.97 H199.2 M195.90,287.44 H199.2 M190.50,284.92 H199.2 M195.90,282.40 H199.2 M195.90,279.87 H199.2 M195.90,277.35 H199.2 M195.90,274.82 H199.2 M193.20,272.30 H199.2 M195.90,269.77 H199.2 M195.90,267.25 H199.2 M195.90,264.72 H199.2 M195.90,262.20 H199.2 M190.50,259.67 H199.2 M195.90,257.15 H199.2 M195.90,254.63 H199.2 M195.90,252.10 H199.2 M195.90,249.58 H199.2 M193.20,247.05 H199.2 M195.90,244.53 H199.2 M195.90,242.00 H199.2 M195.90,239.48 H199.2 M195.90,236.95 H199.2 M190.50,234.43 H199.2 M195.90,231.91 H199.2 M195.90,229.38 H199.2 M195.90,226.86 H199.2 M195.90,224.33 H199.2 M193.20,221.81 H199.2 M195.90,219.28 H199.2 M195.90,216.76 H199.2 M195.90,214.23 H199.2 M195.90,211.71 H199.2 M190.50,209.18 H199.2 M195.90,206.66 H199.2 M195.90,204.14 H199.2 M195.90,201.61 H199.2 M195.90,199.09 H199.2 M193.20,196.56 H199.2 M195.90,194.04 H199.2 M195.90,191.51 H199.2 M195.90,188.99 H199.2 M195.90,186.46 H199.2 M190.50,183.94 H199.2 M195.90,181.42 H199.2 M195.90,178.89 H199.2 M195.90,176.37 H199.2 M195.90,173.84 H199.2 M193.20,171.32 H199.2 M195.90,168.79 H199.2 M195.90,166.27 H199.2 M195.90,163.74 H199.2 M195.90,161.22 H199.2 M190.50,158.69 H199.2 M195.90,156.17 H199.2 M195.90,153.65 H199.2 M195.90,151.12 H199.2 M195.90,148.60 H199.2 M193.20,146.07 H199.2 M195.90,143.55 H199.2 M195.90,141.02 H199.2 M195.90,138.50 H199.2 M195.90,135.97 H199.2 M190.50,133.45 H199.2 M195.90,130.93 H199.2 M195.90,128.40 H199.2 M195.90,125.88 H199.2 M195.90,123.35 H199.2 M193.20,120.83 H199.2 M195.90,118.30 H199.2 M195.90,115.78 H199.2 M195.90,113.25 H199.2 M199.20,659.6 V668.00 M205.30,659.6 V662.60 M211.39,659.6 V662.60 M217.49,659.6 V662.60 M223.58,659.6 V662.60 M229.68,659.6 V665.30 M235.78,659.6 V662.60 M241.87,659.6 V662.60 M247.97,659.6 V662.60 M254.06,659.6 V662.60 M260.16,659.6 V668.00 M266.26,659.6 V662.60 M272.35,659.6 V662.60 M278.45,659.6 V662.60 M284.54,659.6 V662.60 M290.64,659.6 V665.30 M296.74,659.6 V662.60 M302.83,659.6 V662.60 M308.93,659.6 V662.60 M315.02,659.6 V662.60 M321.12,659.6 V668.00 M327.22,659.6 V662.60 M333.31,659.6 V662.60 M339.41,659.6 V662.60 M345.50,659.6 V662.60 M351.60,659.6 V665.30 M357.70,659.6 V662.60 M363.79,659.6 V662.60 M369.89,659.6 V662.60 M375.98,659.6 V662.60 M382.08,659.6 V668.00 M388.18,659.6 V662.60 M394.27,659.6 V662.60 M400.37,659.6 V662.60 M406.46,659.6 V662.60 M412.56,659.6 V665.30 M418.66,659.6 V662.60 M424.75,659.6 V662.60 M430.85,659.6 V662.60 M436.94,659.6 V662.60 M443.04,659.6 V668.00 M449.14,659.6 V662.60 M455.23,659.6 V662.60 M461.33,659.6 V662.60 M467.42,659.6 V662.60 M473.52,659.6 V665.30 M479.62,659.6 V662.60 M485.71,659.6 V662.60 M491.81,659.6 V662.60 M497.90,659.6 V662.60 M504.00,659.6 V668.00 M510.10,659.6 V662.60 M516.19,659.6 V662.60 M522.29,659.6 V662.60 M528.38,659.6 V662.60 M534.48,659.6 V665.30 M540.58,659.6 V662.60 M546.67,659.6 V662.60 M552.77,659.6 V662.60 M558.86,659.6 V662.60 M564.96,659.6 V668.00 M571.06,659.6 V662.60 M577.15,659.6 V662.60 M583.25,659.6 V662.60 M589.34,659.6 V662.60 M595.44,659.6 V665.30 M601.54,659.6 V662.60 M607.63,659.6 V662.60 M613.73,659.6 V662.60 M619.82,659.6 V662.60 M625.92,659.6 V668.00 M632.02,659.6 V662.60 M638.11,659.6 V662.60 M644.21,659.6 V662.60 M650.30,659.6 V662.60 M656.40,659.6 V665.30 M662.50,659.6 V662.60 M668.59,659.6 V662.60 M674.69,659.6 V662.60 M680.78,659.6 V662.60 M686.88,659.6 V668.00 M692.98,659.6 V662.60 M699.07,659.6 V662.60 M705.17,659.6 V662.60 M711.26,659.6 V662.60 M717.36,659.6 V665.30 M723.46,659.6 V662.60 M729.55,659.6 V662.60 M735.65,659.6 V662.60 M741.74,659.6 V662.60 M747.84,659.6 V668.00 M753.94,659.6 V662.60 M760.03,659.6 V662.60 M766.13,659.6 V662.60 M772.22,659.6 V662.60 M778.32,659.6 V665.30 M784.42,659.6 V662.60 M790.51,659.6 V662.60 M796.61,659.6 V662.60 M802.70,659.6 V662.60 M808.80,659.6 V668.00 M814.90,659.6 V662.60 M820.99,659.6 V662.60 M827.09,659.6 V662.60 M833.18,659.6 V662.60 M839.28,659.6 V665.30 M845.38,659.6 V662.60 M851.47,659.6 V662.60 M857.57,659.6 V662.60 M863.66,659.6 V662.60 M869.76,659.6 V668.00 M875.86,659.6 V662.60 M881.95,659.6 V662.60 M888.05,659.6 V662.60 M894.14,659.6 V662.60 M900.24,659.6 V665.30 M906.34,659.6 V662.60 M912.43,659.6 V662.60 M918.53,659.6 V662.60 M924.62,659.6 V662.60 M930.72,659.6 V668.00 M936.82,659.6 V662.60 M942.91,659.6 V662.60 M949.01,659.6 V662.60 M955.10,659.6 V662.60 M961.20,659.6 V665.30 M967.30,659.6 V662.60 M973.39,659.6 V662.60 M979.49,659.6 V662.60 M985.58,659.6 V662.60 M991.68,659.6 V668.00 M997.78,659.6 V662.60 M1003.87,659.6 V662.60 M1009.97,659.6 V662.60 M1016.06,659.6 V662.60 M1022.16,659.6 V665.30 M1028.26,659.6 V662.60 M1034.35,659.6 V662.60 M1040.45,659.6 V662.60 M1046.54,659.6 V662.60 M1052.64,659.6 V668.00 M1058.74,659.6 V662.60 M1064.83,659.6 V662.60 M1070.93,659.6 V662.60 M1077.02,659.6 V662.60 M1083.12,659.6 V665.30 M1089.22,659.6 V662.60 M1095.31,659.6 V662.60 M1101.41,659.6 V662.60 M1107.50,659.6 V662.60 M1113.60,659.6 V668.00 M1119.70,659.6 V662.60 M1125.79,659.6 V662.60 M1131.89,659.6 V662.60 M1137.98,659.6 V662.60 M1144.08,659.6 V665.30 M1150.18,659.6 V662.60 M1156.27,659.6 V662.60 M1162.37,659.6 V662.60 M1168.46,659.6 V662.60 M1174.56,659.6 V668.00 M1180.66,659.6 V662.60 M1186.75,659.6 V662.60 M1192.85,659.6 V662.60 M1198.94,659.6 V662.60 M1205.04,659.6 V665.30 M1211.14,659.6 V662.60 M1217.23,659.6 V662.60 M1223.33,659.6 V662.60 M1229.42,659.6 V662.60 M1235.52,659.6 V668.00 M1241.62,659.6 V662.60 M1247.71,659.6 V662.60 M1253.81,659.6 V662.60 M1259.90,659.6 V662.60 M1266.00,659.6 V665.30 M1272.10,659.6 V662.60 M1278.19,659.6 V662.60 M1284.29,659.6 V662.60 M1290.38,659.6 V662.60 M1296.48,659.6 V668.00 M1302.58,659.6 V662.60 M1308.67,659.6 V662.60 M1314.77,659.6 V662.60 M1320.86,659.6 V662.60 M1326.96,659.6 V665.30 M1333.06,659.6 V662.60 M1339.15,659.6 V662.60 M1345.25,659.6 V662.60 M1351.34,659.6 V662.60 M1357.44,659.6 V668.00 M1363.54,659.6 V662.60 M1369.63,659.6 V662.60 M1375.73,659.6 V662.60 M1381.82,659.6 V662.60 M1387.92,659.6 V665.30 M1394.02,659.6 V662.60 M1400.11,659.6 V662.60 M1406.21,659.6 V662.60 M1412.30,659.6 V662.60 M1418.40,659.6 V668.00" stroke="#5a5a5a" stroke-width="1" fill="none"/>
<path d="M190.50,638.35 H199.2 M190.50,613.11 H199.2 M190.50,587.86 H199.2 M190.50,562.62 H199.2 M190.50,537.37 H199.2 M190.50,512.12 H199.2 M190.50,486.88 H199.2 M190.50,461.63 H199.2 M190.50,436.39 H199.2 M190.50,411.14 H199.2 M190.50,385.90 H199.2 M190.50,360.65 H199.2 M190.50,335.41 H199.2 M190.50,310.16 H199.2 M190.50,284.92 H199.2 M190.50,259.67 H199.2 M190.50,234.43 H199.2 M190.50,209.18 H199.2 M190.50,183.94 H199.2 M190.50,158.69 H199.2 M190.50,133.45 H199.2 M199.20,659.6 V668.00 M260.16,659.6 V668.00 M321.12,659.6 V668.00 M382.08,659.6 V668.00 M443.04,659.6 V668.00 M504.00,659.6 V668.00 M564.96,659.6 V668.00 M625.92,659.6 V668.00 M686.88,659.6 V668.00 M747.84,659.6 V668.00 M808.80,659.6 V668.00 M869.76,659.6 V668.00 M930.72,659.6 V668.00 M991.68,659.6 V668.00 M1052.64,659.6 V668.00 M1113.60,659.6 V668.00 M1174.56,659.6 V668.00 M1235.52,659.6 V668.00 M1296.48,659.6 V668.00 M1357.44,659.6 V668.00 M1418.40,659.6 V668.00" stroke="#555555" stroke-width="1.1" fill="none"/>
<rect x="199.2" y="112.0" width="1219.20" height="547.60" stroke="#5e5e5e" stroke-width="1.2" fill="none"/>
<g fill="#b2bac2" font-size="8.6" font-family="Liberation Sans, sans-serif"><text transform="translate(189.60,641.35) scale(0.93,1)" text-anchor="end">-50</text><text transform="translate(189.60,616.11) scale(0.93,1)" text-anchor="end">-45</text><text transform="translate(189.60,590.86) scale(0.93,1)" text-anchor="end">-40</text><text transform="translate(189.60,565.62) scale(0.93,1)" text-anchor="end">-35</text><text transform="translate(189.60,540.37) scale(0.93,1)" text-anchor="end">-30</text><text transform="translate(189.60,515.12) scale(0.93,1)" text-anchor="end">-25</text><text transform="translate(189.60,489.88) scale(0.93,1)" text-anchor="end">-20</text><text transform="translate(189.60,464.63) scale(0.93,1)" text-anchor="end">-15</text><text transform="translate(189.60,439.39) scale(0.93,1)" text-anchor="end">-10</text><text transform="translate(189.60,414.14) scale(0.93,1)" text-anchor="end">-5</text><text transform="translate(189.60,388.90) scale(0.93,1)" text-anchor="end">0</text><text transform="translate(189.60,363.65) scale(0.93,1)" text-anchor="end">5</text><text transform="translate(189.60,338.41) scale(0.93,1)" text-anchor="end">10</text><text transform="translate(189.60,313.16) scale(0.93,1)" text-anchor="end">15</text><text transform="translate(189.60,287.92) scale(0.93,1)" text-anchor="end">20</text><text transform="translate(189.60,262.67) scale(0.93,1)" text-anchor="end">25</text><text transform="translate(189.60,237.43) scale(0.93,1)" text-anchor="end">30</text><text transform="translate(189.60,212.18) scale(0.93,1)" text-anchor="end">35</text><text transform="translate(189.60,186.94) scale(0.93,1)" text-anchor="end">40</text><text transform="translate(189.60,161.69) scale(0.93,1)" text-anchor="end">45</text><text transform="translate(189.60,136.45) scale(0.93,1)" text-anchor="end">50</text><text transform="translate(260.16,677.4) scale(0.93,1)" text-anchor="middle">0,05</text><text transform="translate(321.12,677.4) scale(0.93,1)" text-anchor="middle">0,1</text><text transform="translate(382.08,677.4) scale(0.93,1)" text-anchor="middle">0,15</text><text transform="translate(443.04,677.4) scale(0.93,1)" text-anchor="middle">0,2</text><text transform="translate(504.00,677.4) scale(0.93,1)" text-anchor="middle">0,25</text><text transform="translate(564.96,677.4) scale(0.93,1)" text-anchor="middle">0,3</text><text transform="translate(625.92,677.4) scale(0.93,1)" text-anchor="middle">0,35</text><text transform="translate(686.88,677.4) scale(0.93,1)" text-anchor="middle">0,4</text><text transform="translate(747.84,677.4) scale(0.93,1)" text-anchor="middle">0,45</text><text transform="translate(808.80,677.4) scale(0.93,1)" text-anchor="middle">0,5</text><text transform="translate(869.76,677.4) scale(0.93,1)" text-anchor="middle">0,55</text><text transform="translate(930.72,677.4) scale(0.93,1)" text-anchor="middle">0,6</text><text transform="translate(991.68,677.4) scale(0.93,1)" text-anchor="middle">0,65</text><text transform="translate(1052.64,677.4) scale(0.93,1)" text-anchor="middle">0,7</text><text transform="translate(1113.60,677.4) scale(0.93,1)" text-anchor="middle">0,75</text><text transform="translate(1174.56,677.4) scale(0.93,1)" text-anchor="middle">0,8</text><text transform="translate(1235.52,677.4) scale(0.93,1)" text-anchor="middle">0,85</text><text transform="translate(1296.48,677.4) scale(0.93,1)" text-anchor="middle">0,9</text><text transform="translate(1357.44,677.4) scale(0.93,1)" text-anchor="middle">0,95</text></g>
<clipPath id="c0"><rect x="199.2" y="660" width="20" height="30"/></clipPath>
<g clip-path="url(#c0)"><text transform="translate(199.2,677.4) scale(0.93,1)" text-anchor="middle" fill="#b2bac2" font-size="8.6" font-family="Liberation Sans, sans-serif">0</text></g>
<path d="M197.4,87.1 H209.8" stroke="#b4b4b4" stroke-width="1.5" fill="none"/>
<path d="M197.4,87.3 L203.6,98.9 L209.8,87.3" stroke="#474747" stroke-width="1.45" fill="none" stroke-linejoin="round" stroke-linecap="round"/>
<path d="M203.3,89.6 V94.2 M202.4,90.4 L203.3,89.6" stroke="#5a6a78" stroke-width="0.9" fill="none"/>
<path d="M1333.2,684.6 H1329.2 V713.3 H1333.2" stroke="#4ba3e0" stroke-width="1.8" fill="none"/>
<path d="M779,709.4 H816.6" stroke="#6b8ea8" stroke-width="1.2"/>
</svg>

<!-- window buttons -->
<svg width="1428" height="40" viewBox="0 0 1428 40" style="left:0;top:0">
<path d="M1366.6,14.4 L1370.7,17.2 L1374.8,14.4" stroke="#4a7494" stroke-width="1.8" fill="none" stroke-linejoin="round"/>
<rect x="1386.6" y="12.6" width="10" height="6.6" rx="1.3" stroke="#4f7896" stroke-width="1.2" fill="none"/>
<rect x="1384" y="15.1" width="10.2" height="6.4" rx="1.3" stroke="#4f7896" stroke-width="1.2" fill="#dfe1e0"/>
<path d="M1405.3,12.3 L1414.2,21 M1414.2,12.3 L1405.3,21" stroke="#4f7896" stroke-width="1.3" fill="none"/>
</svg>
<!-- toolbar -->
<svg width="120" height="30" viewBox="0 30 120 30" style="left:0;top:30px">
<path d="M7.6,40 Q9.6,44 10.7,45.9 Q11.35,46.9 12,45.9 L13.7,41.2 Q15,38.5 17.9,40.3" stroke="#4a7393" stroke-width="1.65" fill="none" stroke-linecap="round" stroke-linejoin="round"/>
<path d="M14.5,45.9 H17.6 M16.05,44.35 V47.45" stroke="#466f90" stroke-width="1.6" stroke-linecap="round"/>
<path d="M30.9,40 Q32.9,44 34,45.9 Q34.65,46.9 35.3,45.9 L37,41.2 Q38.3,38.5 41.1,40.5" stroke="#b9c7d1" stroke-width="1.6" fill="none" stroke-linecap="round" stroke-linejoin="round"/>
<path d="M37.7,46.1 H41.2" stroke="#b9c7d1" stroke-width="1.5" stroke-linecap="round"/>
<path d="M50.6,36.2 V52.4" stroke="#a3adb4" stroke-width="1.2"/>
<path d="M70.6,42.7 H60.2 M65.4,37.3 L60.2,42.7 L65.4,48" stroke="#b8c6d0" stroke-width="1.3" fill="none"/>
<path d="M82.4,42.7 H93.2 M88,37.3 L93.2,42.7 L88,48" stroke="#b8c6d0" stroke-width="1.3" fill="none"/>
</svg>


</body></html>
